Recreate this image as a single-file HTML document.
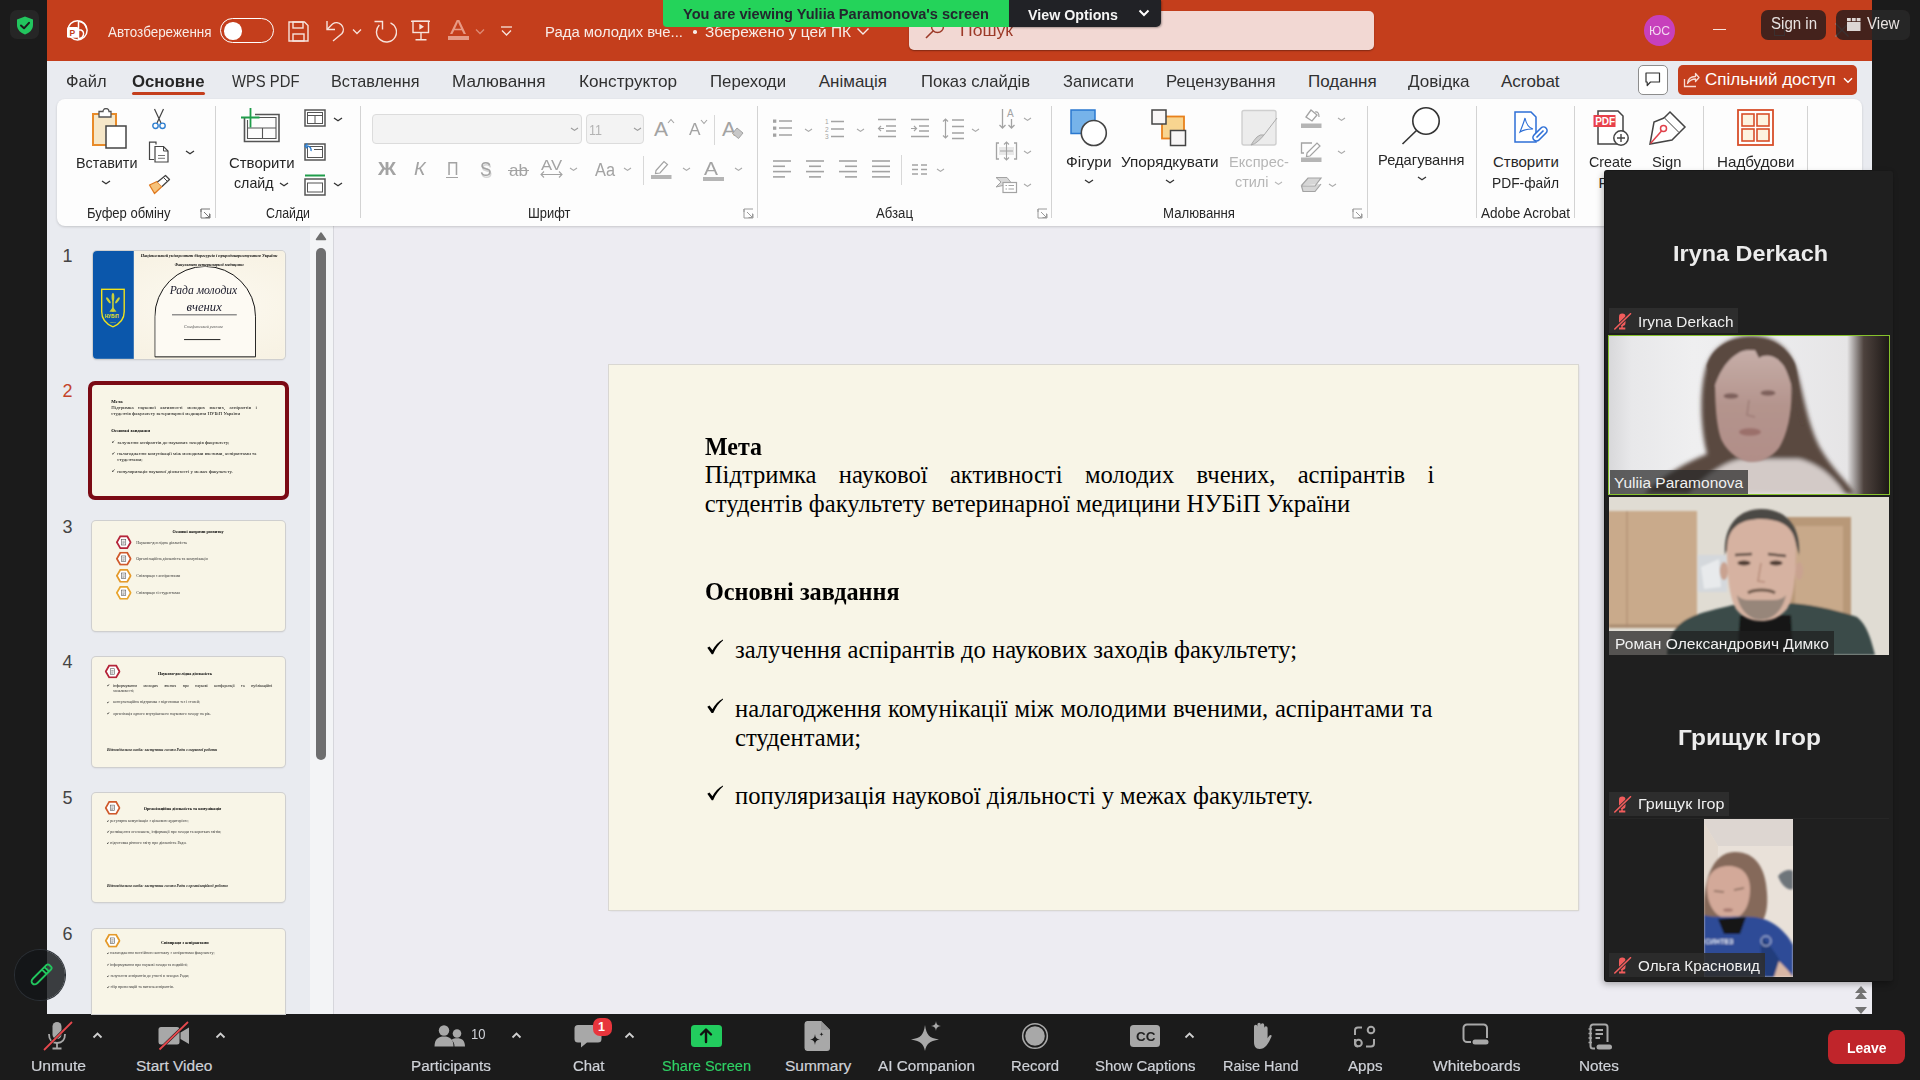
<!DOCTYPE html>
<html><head><meta charset="utf-8"><style>
html,body{margin:0;padding:0;width:1920px;height:1080px;overflow:hidden;background:#1b1b1b;}
body>div,body>svg{position:absolute;}
.t{transform-origin:0 50%;}
</style></head><body>
<div style="left:47px;top:0px;width:1825px;height:61px;background:#c43e1c;"></div>
<div style="left:47px;top:61px;width:1825px;height:953px;background:#e9ebf0;"></div>
<div style="left:334px;top:226px;width:1538px;height:788px;background:#edecf2;"></div>
<div style="left:310px;top:226px;width:23px;height:788px;background:#f3f4f6;"></div>
<div style="left:333px;top:226px;width:1px;height:788px;background:#d6d6dc;"></div>
<div style="left:57px;top:99px;width:1805px;height:127px;background:#fdfdfd;border-radius:8px;box-shadow:0 1px 2.5px rgba(0,0,0,0.16);"></div>
<div style="left:609px;top:365px;width:969px;height:545px;background:#f8f5e7;box-shadow:0 0 0 1px #d9d7d2, 1px 1px 2px rgba(0,0,0,0.10);"></div>
<div style="left:10px;top:10px;width:29px;height:29px;background:#262626;border-radius:7px;"></div>
<svg style="left:16px;top:16px;" width="18" height="19" viewBox="0 0 18 19"><path d="M9 0.5 L17 3.5 L17 9 C17 13.5 13.5 17 9 18.5 C4.5 17 1 13.5 1 9 L1 3.5 Z" fill="#22c55e"/><path d="M5 9.5 L8 12.3 L13 6.8" stroke="#1b1b1b" stroke-width="2" fill="none" stroke-linecap="round" stroke-linejoin="round"/></svg>
<svg style="left:64px;top:18px;" width="26" height="26" viewBox="0 0 26 26"><circle cx="13.5" cy="12.3" r="9.6" fill="none" stroke="#fff" stroke-width="1.5"/><path d="M14.5 3 V21.5" stroke="#fff" stroke-width="1.5"/><path d="M14.5 12 H17 A4.5 4.5 0 0 1 14.5 20.5" fill="none" stroke="#fff" stroke-width="1.4"/><path d="M14.5 3.2 A9.5 9.5 0 0 1 22.5 10.5" fill="none" stroke="#fff" stroke-width="1.4"/><rect x="3" y="9" width="11.5" height="10.8" rx="1.6" fill="#fff"/><text x="5.6" y="17.6" font-family="Liberation Sans" font-weight="bold" font-size="8.5" fill="#c43e1c">P</text></svg>
<div id="t0" class="t" style="transform:scaleX(0.8955);left:108px;top:23.95px;font-family:'Liberation Sans',sans-serif;font-size:15px;line-height:15px;color:#f8ece8;font-weight:400;white-space:pre;">Автозбереження</div>
<div style="left:219.5px;top:18px;width:54px;height:25px;background:transparent;border:1.5px solid #fff;border-radius:13px;box-sizing:border-box;"></div>
<div style="left:224px;top:22px;width:17.5px;height:17.5px;background:#fff;border-radius:50%;"></div>
<svg style="left:288px;top:21px;" width="21" height="21" viewBox="0 0 21 21"><path d="M1 1 H16.5 L20 4.5 V20 H1 Z" fill="none" stroke="#f7e3dc" stroke-width="1.4"/><rect x="5" y="1" width="10" height="6" fill="none" stroke="#f7e3dc" stroke-width="1.4"/><rect x="5" y="13" width="11" height="7" fill="none" stroke="#f7e3dc" stroke-width="1.4"/></svg>
<svg style="left:324px;top:19px;" width="22" height="24" viewBox="0 0 22 24"><path d="M3 2 V10.5 H11" fill="none" stroke="#f7e3dc" stroke-width="1.4"/><path d="M3.5 10 L8.5 5 A6.8 6.8 0 0 1 18 14.5 L9 22" fill="none" stroke="#f7e3dc" stroke-width="1.4"/></svg>
<svg style="left:352px;top:28px;" width="10" height="7" viewBox="0 0 10 7"><path d="M1 1.5 L5 5.5 L9 1.5" fill="none" stroke="#f7e3dc" stroke-width="1.3"/></svg>
<svg style="left:373px;top:19px;" width="24" height="24" viewBox="0 0 24 24"><path d="M6.3 6 A10 10 0 1 0 17.5 3.8" fill="none" stroke="#f7e3dc" stroke-width="1.4"/><path d="M1.5 2.5 H9.5 V10.5" fill="none" stroke="#f7e3dc" stroke-width="1.4"/></svg>
<svg style="left:410px;top:20px;" width="22" height="22" viewBox="0 0 22 22"><path d="M1 1.3 H20" stroke="#f7e3dc" stroke-width="1.4"/><rect x="3" y="1.3" width="15.5" height="11.2" fill="none" stroke="#f7e3dc" stroke-width="1.4"/><path d="M11 12.5 V19.7 M5.5 19.7 H16.5" stroke="#f7e3dc" stroke-width="1.4"/><path d="M9.3 3.8 L14 6.8 L9.3 9.8 Z" fill="#f7e3dc"/></svg>
<div id="t1" class="t" style="transform:scaleX(1.1991);left:450px;top:17.00px;font-family:'Liberation Sans',sans-serif;font-size:20px;line-height:20px;color:#e89a85;font-weight:400;white-space:pre;">A</div>
<div style="left:448px;top:36px;width:20.5px;height:4px;background:#e59a86;"></div>
<svg style="left:475px;top:28px;" width="10" height="7" viewBox="0 0 10 7"><path d="M1 1.5 L5 5.5 L9 1.5" fill="none" stroke="#dd8a74" stroke-width="1.3"/></svg>
<svg style="left:500px;top:26px;" width="13" height="10" viewBox="0 0 13 10"><path d="M1 1 H12" stroke="#f7e3dc" stroke-width="1.3"/><path d="M2 4.5 L6.5 9 L11 4.5" fill="none" stroke="#f7e3dc" stroke-width="1.3"/></svg>
<div id="t2" class="t" style="transform:scaleX(0.9599);left:545px;top:23.83px;font-family:'Liberation Sans',sans-serif;font-size:15.5px;line-height:15.5px;color:#f8ece8;font-weight:400;white-space:pre;">Рада молодих вче...</div>
<div style="left:693px;top:30px;width:3.5px;height:3.5px;background:#f8ece8;border-radius:50%;"></div>
<div id="t3" class="t" style="transform:scaleX(0.9949);left:704.5px;top:23.83px;font-family:'Liberation Sans',sans-serif;font-size:15.5px;line-height:15.5px;color:#f8ece8;font-weight:400;white-space:pre;">Збережено у цей ПК</div>
<svg style="left:856px;top:27px;" width="14" height="9" viewBox="0 0 14 9"><path d="M1.5 1.5 L7 7 L12.5 1.5" fill="none" stroke="#f8ece8" stroke-width="1.4"/></svg>
<div style="left:908.5px;top:10.5px;width:465.5px;height:39px;background:#f2d8d3;border-radius:5px;box-shadow:0 1px 1.5px rgba(0,0,0,0.35);"></div>
<svg style="left:924px;top:18px;" width="22" height="22" viewBox="0 0 22 22"><circle cx="13.5" cy="8.5" r="6" fill="none" stroke="#9c3a28" stroke-width="1.5"/><path d="M9.3 12.7 L2 20" stroke="#9c3a28" stroke-width="1.6"/></svg>
<div id="t4" class="t" style="transform:scaleX(1.0653);left:960px;top:22.48px;font-family:'Liberation Sans',sans-serif;font-size:16.5px;line-height:16.5px;color:#9c3a28;font-weight:400;white-space:pre;">Пошук</div>
<div style="left:1644px;top:15px;width:30.5px;height:30.5px;background:#c740bc;border-radius:50%;"></div>
<div id="t5" class="t" style="transform:scaleX(0.9379);left:1649px;top:24.45px;font-family:'Liberation Sans',sans-serif;font-size:13px;line-height:13px;color:#f3d8f0;font-weight:400;white-space:pre;">ЮС</div>
<div style="left:1713px;top:29px;width:13px;height:1.2px;background:#f7e3dc;"></div>
<div style="left:1774px;top:25px;width:10.5px;height:11px;background:transparent;border:1.3px solid #8a8a8a;box-sizing:border-box;"></div>
<div style="left:1761px;top:10px;width:65px;height:30px;background:rgba(40,28,28,0.82);border-radius:7px;"></div>
<div id="t6" class="t" style="transform:scaleX(0.9403);left:1771px;top:16.20px;font-family:'Liberation Sans',sans-serif;font-size:16px;line-height:16px;color:#e8e2e0;font-weight:400;white-space:pre;">Sign in</div>
<svg style="left:1834px;top:22px;" width="16" height="16" viewBox="0 0 16 16"><path d="M1.5 1.5 L14.5 14.5 M14.5 1.5 L1.5 14.5" stroke="#8a8a8a" stroke-width="1.3"/></svg>
<div style="left:1836px;top:10px;width:74px;height:30px;background:rgba(40,28,28,0.82);border-radius:7px;"></div>
<div style="left:1872px;top:10px;width:38px;height:30px;background:#262626;border-radius:0 7px 7px 0;"></div>
<svg style="left:1846.5px;top:18px;" width="14" height="13" viewBox="0 0 14 13"><rect x="0" y="4" width="13.5" height="9" fill="#dcd6d4"/><rect x="0" y="0" width="3.8" height="3.2" fill="#dcd6d4"/><rect x="4.9" y="0" width="3.8" height="3.2" fill="#dcd6d4"/><rect x="9.7" y="0" width="3.8" height="3.2" fill="#dcd6d4"/></svg>
<div id="t7" class="t" style="transform:scaleX(0.9450);left:1867px;top:16.20px;font-family:'Liberation Sans',sans-serif;font-size:16px;line-height:16px;color:#e8e2e0;font-weight:400;white-space:pre;">View</div>
<div style="left:663px;top:0px;width:346px;height:27px;background:#24d35a;border-radius:0 0 0 4px;"></div>
<div style="left:1008.5px;top:0px;width:152px;height:26.5px;background:#212226;border-radius:0 0 5px 0;box-shadow:1px 1px 2px rgba(0,0,0,0.3);"></div>
<div id="t8" class="t" style="transform:scaleX(0.9720);left:683px;top:6.25px;font-family:'Liberation Sans',sans-serif;font-size:15px;line-height:15px;color:#23272e;font-weight:700;white-space:pre;">You are viewing Yuliia Paramonova's screen</div>
<div id="t9" class="t" style="transform:scaleX(0.9499);left:1028px;top:6.75px;font-family:'Liberation Sans',sans-serif;font-size:15px;line-height:15px;color:#f5f5f5;font-weight:700;white-space:pre;">View Options</div>
<svg style="left:1138px;top:9px;" width="12" height="9" viewBox="0 0 12 9"><path d="M1.5 1.5 L6 6 L10.5 1.5" fill="none" stroke="#fff" stroke-width="2"/></svg>
<div id="t10" class="t" style="transform:scaleX(0.9690);left:66px;top:72.85px;font-family:'Liberation Sans',sans-serif;font-size:17px;line-height:17px;color:#303030;font-weight:400;white-space:pre;">Файл</div>
<div id="t11" class="t" style="transform:scaleX(0.8715);left:232px;top:72.85px;font-family:'Liberation Sans',sans-serif;font-size:17px;line-height:17px;color:#303030;font-weight:400;white-space:pre;">WPS PDF</div>
<div id="t12" class="t" style="transform:scaleX(0.9527);left:331px;top:72.85px;font-family:'Liberation Sans',sans-serif;font-size:17px;line-height:17px;color:#303030;font-weight:400;white-space:pre;">Вставлення</div>
<div id="t13" class="t" style="transform:scaleX(1.0079);left:452px;top:72.85px;font-family:'Liberation Sans',sans-serif;font-size:17px;line-height:17px;color:#303030;font-weight:400;white-space:pre;">Малювання</div>
<div id="t14" class="t" style="transform:scaleX(1.0110);left:579px;top:72.85px;font-family:'Liberation Sans',sans-serif;font-size:17px;line-height:17px;color:#303030;font-weight:400;white-space:pre;">Конструктор</div>
<div id="t15" class="t" style="transform:scaleX(0.9868);left:710.4px;top:72.85px;font-family:'Liberation Sans',sans-serif;font-size:17px;line-height:17px;color:#303030;font-weight:400;white-space:pre;">Переходи</div>
<div id="t16" class="t" style="left:818.7px;top:72.85px;font-family:'Liberation Sans',sans-serif;font-size:17px;line-height:17px;color:#303030;font-weight:400;white-space:pre;">Анімація</div>
<div id="t17" class="t" style="transform:scaleX(0.9787);left:921.4px;top:72.85px;font-family:'Liberation Sans',sans-serif;font-size:17px;line-height:17px;color:#303030;font-weight:400;white-space:pre;">Показ слайдів</div>
<div id="t18" class="t" style="transform:scaleX(0.9687);left:1062.5px;top:72.85px;font-family:'Liberation Sans',sans-serif;font-size:17px;line-height:17px;color:#303030;font-weight:400;white-space:pre;">Записати</div>
<div id="t19" class="t" style="transform:scaleX(0.9880);left:1166px;top:72.85px;font-family:'Liberation Sans',sans-serif;font-size:17px;line-height:17px;color:#303030;font-weight:400;white-space:pre;">Рецензування</div>
<div id="t20" class="t" style="left:1308px;top:72.85px;font-family:'Liberation Sans',sans-serif;font-size:17px;line-height:17px;color:#303030;font-weight:400;white-space:pre;">Подання</div>
<div id="t21" class="t" style="transform:scaleX(1.0056);left:1408px;top:72.85px;font-family:'Liberation Sans',sans-serif;font-size:17px;line-height:17px;color:#303030;font-weight:400;white-space:pre;">Довідка</div>
<div id="t22" class="t" style="left:1501px;top:72.85px;font-family:'Liberation Sans',sans-serif;font-size:17px;line-height:17px;color:#303030;font-weight:400;white-space:pre;">Acrobat</div>
<div id="t23" class="t" style="transform:scaleX(0.9862);left:132px;top:72.85px;font-family:'Liberation Sans',sans-serif;font-size:17px;line-height:17px;color:#262626;font-weight:700;white-space:pre;">Основне</div>
<div style="left:132px;top:91.5px;width:73px;height:3px;background:#c43e1c;border-radius:1.5px;"></div>
<div style="left:1638px;top:65px;width:30px;height:30px;background:#ffffff;border:1px solid #8d8d8d;border-radius:5px;box-sizing:border-box;"></div>
<svg style="left:1645px;top:72px;" width="16" height="15" viewBox="0 0 16 15"><path d="M1 1 H14.5 V10 H5.5 L2.2 13.5 V10 H1 Z" fill="none" stroke="#333" stroke-width="1.2" stroke-linejoin="round"/></svg>
<div style="left:1678px;top:64.7px;width:179px;height:30.3px;background:#c43e1c;border-radius:5px;"></div>
<svg style="left:1683px;top:72px;" width="17" height="16" viewBox="0 0 17 16"><path d="M1.5 7 V14.5 H13" fill="none" stroke="#f7dcd4" stroke-width="1.3"/><path d="M4.5 11.5 C5 6.5 8.5 4.5 12.5 4.5 V1.5 L16 5.5 L12.5 9.5 V7 C9 7 6.5 8.5 4.5 11.5 Z" fill="none" stroke="#f7dcd4" stroke-width="1.3" stroke-linejoin="round"/></svg>
<div id="t24" class="t" style="left:1705px;top:71.25px;font-family:'Liberation Sans',sans-serif;font-size:17px;line-height:17px;color:#ffffff;font-weight:400;white-space:pre;">Спільний доступ</div>
<svg style="left:1842.5px;top:77px;" width="10" height="7" viewBox="0 0 10 7"><path d="M1 1.3 L5 5.3 L9 1.3" fill="none" stroke="#fff" stroke-width="1.4"/></svg>
<div style="left:214.5px;top:106px;width:1px;height:112px;background:#d3d3d3;"></div>
<div style="left:360px;top:106px;width:1px;height:112px;background:#d3d3d3;"></div>
<div style="left:757px;top:106px;width:1px;height:112px;background:#d3d3d3;"></div>
<div style="left:1051px;top:106px;width:1px;height:112px;background:#d3d3d3;"></div>
<div style="left:1366.5px;top:106px;width:1px;height:112px;background:#d3d3d3;"></div>
<div style="left:1476px;top:106px;width:1px;height:112px;background:#d3d3d3;"></div>
<div style="left:1573.5px;top:106px;width:1px;height:112px;background:#d3d3d3;"></div>
<div style="left:1703px;top:106px;width:1px;height:112px;background:#d3d3d3;"></div>
<div style="left:1807px;top:106px;width:1px;height:112px;background:#d3d3d3;"></div>
<svg style="left:90px;top:108px;" width="40" height="42" viewBox="0 0 40 42"><rect x="3" y="6" width="23" height="31" fill="#f6e7c8" stroke="#e88b2a" stroke-width="2"/><path d="M9 3.5 H13 A3 3 0 0 1 19 3.5 H21 V9 H9 Z" fill="#fff" stroke="#555" stroke-width="1.3"/><rect x="16" y="18" width="20" height="22" fill="#fff" stroke="#444" stroke-width="1.5"/></svg>
<div id="t25" class="t" style="transform:scaleX(0.9586);left:76px;top:155.25px;font-family:'Liberation Sans',sans-serif;font-size:15px;line-height:15px;color:#262626;font-weight:400;white-space:pre;">Вставити</div>
<svg style="left:101px;top:180px;" width="10" height="6" viewBox="0 0 10 6"><path d="M1 1 L5.0 3.80 L9 1" fill="none" stroke="#333" stroke-width="1.3"/></svg>
<svg style="left:151px;top:108px;" width="16" height="22" viewBox="0 0 16 22"><path d="M3.5 1 L10 15 M12.5 1 L6 15" stroke="#444" stroke-width="1.2"/><circle cx="4.5" cy="17.8" r="2.7" fill="none" stroke="#2f7fd0" stroke-width="1.4"/><circle cx="11.5" cy="17.8" r="2.7" fill="none" stroke="#2f7fd0" stroke-width="1.4"/></svg>
<svg style="left:148px;top:141px;" width="22" height="22" viewBox="0 0 22 22"><path d="M8 3.5 V1.2 H1.5 V18.5 H6" fill="none" stroke="#444" stroke-width="1.2"/><path d="M7 5.5 H15.5 L20 10 V21 H7 Z" fill="#fff" stroke="#444" stroke-width="1.2"/><path d="M15.5 5.5 V10 H20" fill="none" stroke="#444" stroke-width="1"/><path d="M10 14.5 H17 M10 17.3 H17" stroke="#666" stroke-width="0.9"/></svg>
<svg style="left:184.5px;top:150px;" width="10" height="6" viewBox="0 0 10 6"><path d="M1 1 L5.0 3.80 L9 1" fill="none" stroke="#333" stroke-width="1.3"/></svg>
<svg style="left:148px;top:174px;" width="23" height="21" viewBox="0 0 23 21"><path d="M1.5 11 L9 7.5 L14 12.5 L6.5 19.5 Z" fill="#f6c27a" stroke="#e07a20" stroke-width="1.3" stroke-linejoin="round"/><path d="M9.5 8 L17.5 1.5 L21.5 5.5 L14 12.5" fill="#fff" stroke="#444" stroke-width="1.3" stroke-linejoin="round"/><path d="M15.5 3.5 L19.5 7.5" stroke="#444" stroke-width="1"/></svg>
<div id="t26" class="t" style="transform:scaleX(0.9312);left:86.5px;top:205.60px;font-family:'Liberation Sans',sans-serif;font-size:14px;line-height:14px;color:#262626;font-weight:400;white-space:pre;">Буфер обміну</div>
<svg style="left:199.5px;top:207.5px;" width="11" height="11" viewBox="0 0 11 11"><path d="M1 4 V1 H10 M1 1 V10 H10 V6" fill="none" stroke="#777" stroke-width="1"/><path d="M4 4 L9.5 9.5 M9.5 5.5 V9.5 H5.5" fill="none" stroke="#777" stroke-width="1"/></svg>
<svg style="left:238px;top:106px;" width="44" height="38" viewBox="0 0 44 38"><path d="M6.5 12 V35.5 H41 V8.5 H17" fill="none" stroke="#555" stroke-width="1.6"/><path d="M9.5 14 V32.5 H38 V11.5 H17 M9.5 22 H38 M24.5 22 V32.5" fill="none" stroke="#555" stroke-width="1.1"/><path d="M3 11.5 H21.5 M12.5 2 V21.5" stroke="#1f9d4a" stroke-width="1.8"/></svg>
<div id="t27" class="t" style="transform:scaleX(0.9950);left:228.5px;top:154.75px;font-family:'Liberation Sans',sans-serif;font-size:15px;line-height:15px;color:#262626;font-weight:400;white-space:pre;">Створити</div>
<div id="t28" class="t" style="transform:scaleX(0.9465);left:234px;top:174.75px;font-family:'Liberation Sans',sans-serif;font-size:15px;line-height:15px;color:#262626;font-weight:400;white-space:pre;">слайд</div>
<svg style="left:279px;top:182px;" width="10" height="6" viewBox="0 0 10 6"><path d="M1 1 L5.0 3.80 L9 1" fill="none" stroke="#333" stroke-width="1.3"/></svg>
<svg style="left:304px;top:109px;" width="23" height="19" viewBox="0 0 23 19"><rect x="1" y="1" width="20" height="16" fill="#fff" stroke="#555" stroke-width="1.5"/><rect x="3.5" y="3.5" width="15" height="11" fill="none" stroke="#555" stroke-width="1"/><path d="M3.5 6.5 H18.5 M11 6.5 V14.5" stroke="#555" stroke-width="1"/></svg>
<svg style="left:333px;top:117px;" width="10" height="6" viewBox="0 0 10 6"><path d="M1 1 L5.0 3.80 L9 1" fill="none" stroke="#333" stroke-width="1.3"/></svg>
<svg style="left:304px;top:141px;" width="23" height="20" viewBox="0 0 23 20"><rect x="1" y="3" width="20" height="16" fill="#fff" stroke="#555" stroke-width="1.5"/><rect x="3.5" y="5.5" width="15" height="11" fill="none" stroke="#555" stroke-width="1"/><path d="M7 10 A4 4 0 0 0 3 5 L1 5" fill="none" stroke="#2f7fd0" stroke-width="1.4"/><path d="M3.5 2.5 L1 5 L3.5 7.5" fill="none" stroke="#2f7fd0" stroke-width="1.3"/><path d="M10 8.5 H18" stroke="#555" stroke-width="1"/></svg>
<svg style="left:304px;top:174px;" width="23" height="22" viewBox="0 0 23 22"><path d="M1 1.5 H21" stroke="#1f9d4a" stroke-width="2"/><rect x="1" y="5" width="20" height="16" fill="#fff" stroke="#555" stroke-width="1.5"/><rect x="3.5" y="9" width="15" height="9" fill="none" stroke="#555" stroke-width="1"/></svg>
<svg style="left:333px;top:182px;" width="10" height="6" viewBox="0 0 10 6"><path d="M1 1 L5.0 3.80 L9 1" fill="none" stroke="#333" stroke-width="1.3"/></svg>
<div id="t29" class="t" style="transform:scaleX(0.8822);left:265.5px;top:205.60px;font-family:'Liberation Sans',sans-serif;font-size:14px;line-height:14px;color:#262626;font-weight:400;white-space:pre;">Слайди</div>
<div style="left:372px;top:114px;width:210px;height:30px;background:#f3f3f3;border:1px solid #dcdcdc;border-radius:4px;box-sizing:border-box;"></div>
<svg style="left:569.5px;top:127px;" width="9" height="6" viewBox="0 0 9 6"><path d="M1 1 L4.5 3.45 L8 1" fill="none" stroke="#9a9a9a" stroke-width="1.1"/></svg>
<div style="left:585.5px;top:114px;width:58.5px;height:30px;background:#f3f3f3;border:1px solid #dcdcdc;border-radius:4px;box-sizing:border-box;"></div>
<div id="t30" class="t" style="transform:scaleX(0.8345);left:589px;top:121.75px;font-family:'Liberation Sans',sans-serif;font-size:15px;line-height:15px;color:#b3b3b3;font-weight:400;white-space:pre;">11</div>
<svg style="left:632.5px;top:127px;" width="9" height="6" viewBox="0 0 9 6"><path d="M1 1 L4.5 3.45 L8 1" fill="none" stroke="#9a9a9a" stroke-width="1.1"/></svg>
<div id="t31" class="t" style="left:654px;top:117.65px;font-family:'Liberation Sans',sans-serif;font-size:21px;line-height:21px;color:#a3a3a3;font-weight:400;white-space:pre;">A</div>
<svg style="left:667px;top:118px;" width="8" height="6" viewBox="0 0 8 6"><path d="M1 5 L4 1.5 L7 5" fill="none" stroke="#a3a3a3" stroke-width="1.1"/></svg>
<div id="t32" class="t" style="transform:scaleX(1.0138);left:689px;top:121.05px;font-family:'Liberation Sans',sans-serif;font-size:17px;line-height:17px;color:#a3a3a3;font-weight:400;white-space:pre;">A</div>
<svg style="left:699.5px;top:119px;" width="8" height="6" viewBox="0 0 8 6"><path d="M1 1 L4 4.5 L7 1" fill="none" stroke="#a3a3a3" stroke-width="1.1"/></svg>
<div style="left:714px;top:114.5px;width:1px;height:30px;background:#d8d8d8;"></div>
<div id="t33" class="t" style="left:722px;top:117.65px;font-family:'Liberation Sans',sans-serif;font-size:21px;line-height:21px;color:#a3a3a3;font-weight:400;white-space:pre;">A</div>
<svg style="left:731px;top:127px;" width="13" height="13" viewBox="0 0 13 13"><path d="M6 1 L12 6 L7.5 11.5 L1.5 6.5 Z" fill="#c8c8c8" stroke="#a3a3a3" stroke-width="1"/></svg>
<div id="t34" class="t" style="transform:scaleX(1.0473);left:377.5px;top:159.15px;font-family:'Liberation Sans',sans-serif;font-size:19px;line-height:19px;color:#a3a3a3;font-weight:700;white-space:pre;">Ж</div>
<div id="t35" class="t" style="transform:scaleX(1.0265);left:414px;top:159.15px;font-family:'Liberation Sans',sans-serif;font-size:19px;line-height:19px;color:#a3a3a3;font-weight:400;white-space:pre;font-style:italic;">К</div>
<div id="t36" class="t" style="transform:scaleX(0.8889);left:446.5px;top:160.00px;font-family:'Liberation Sans',sans-serif;font-size:18px;line-height:18px;color:#a3a3a3;font-weight:400;white-space:pre;">П</div>
<div style="left:446px;top:176.5px;width:12px;height:1.5px;background:#a3a3a3;"></div>
<div id="t37" class="t" style="transform:scaleX(0.8618);left:480px;top:158.50px;font-family:'Liberation Sans',sans-serif;font-size:20px;line-height:20px;color:#a3a3a3;font-weight:400;white-space:pre;text-shadow:1px 1.5px 0 #d5d5d5;">S</div>
<div id="t38" class="t" style="transform:scaleX(1.0041);left:508.5px;top:161.55px;font-family:'Liberation Sans',sans-serif;font-size:17px;line-height:17px;color:#a3a3a3;font-weight:400;white-space:pre;">ab</div>
<div style="left:507.5px;top:169.5px;width:21.5px;height:1.3px;background:#a3a3a3;"></div>
<div id="t39" class="t" style="transform:scaleX(1.1107);left:541px;top:157.25px;font-family:'Liberation Sans',sans-serif;font-size:15px;line-height:15px;color:#a3a3a3;font-weight:400;white-space:pre;">AV</div>
<svg style="left:540px;top:170px;" width="24" height="9" viewBox="0 0 24 9"><path d="M1 4.5 H22 M4 1.5 L1 4.5 L4 7.5 M19 1.5 L22 4.5 L19 7.5" fill="none" stroke="#a3a3a3" stroke-width="1.1"/></svg>
<svg style="left:568.5px;top:167px;" width="9" height="6" viewBox="0 0 9 6"><path d="M1 1 L4.5 3.45 L8 1" fill="none" stroke="#a8a8a8" stroke-width="1.1"/></svg>
<div id="t40" class="t" style="transform:scaleX(0.9078);left:595px;top:160.70px;font-family:'Liberation Sans',sans-serif;font-size:18px;line-height:18px;color:#a3a3a3;font-weight:400;white-space:pre;">Aa</div>
<svg style="left:622.5px;top:167px;" width="9" height="6" viewBox="0 0 9 6"><path d="M1 1 L4.5 3.45 L8 1" fill="none" stroke="#a8a8a8" stroke-width="1.1"/></svg>
<div style="left:643px;top:155.5px;width:1px;height:29px;background:#d8d8d8;"></div>
<svg style="left:650px;top:159px;" width="23" height="21" viewBox="0 0 23 21"><path d="M6 11.5 L14 2.5 L17.5 5.5 L10 14 L5.5 14.5 Z" fill="#fff" stroke="#a3a3a3" stroke-width="1.2"/><rect x="1" y="16" width="20.5" height="4" fill="#b5b5b5"/></svg>
<svg style="left:681.5px;top:167px;" width="9" height="6" viewBox="0 0 9 6"><path d="M1 1 L4.5 3.45 L8 1" fill="none" stroke="#a8a8a8" stroke-width="1.1"/></svg>
<div id="t41" class="t" style="transform:scaleX(1.1034);left:704px;top:159.35px;font-family:'Liberation Sans',sans-serif;font-size:19px;line-height:19px;color:#a3a3a3;font-weight:400;white-space:pre;">A</div>
<div style="left:703px;top:176.5px;width:20.5px;height:4px;background:#b5b5b5;"></div>
<svg style="left:733.5px;top:167px;" width="9" height="6" viewBox="0 0 9 6"><path d="M1 1 L4.5 3.45 L8 1" fill="none" stroke="#a8a8a8" stroke-width="1.1"/></svg>
<div id="t42" class="t" style="transform:scaleX(0.9227);left:528px;top:205.60px;font-family:'Liberation Sans',sans-serif;font-size:14px;line-height:14px;color:#262626;font-weight:400;white-space:pre;">Шрифт</div>
<svg style="left:743px;top:207.5px;" width="11" height="11" viewBox="0 0 11 11"><path d="M1 4 V1 H10 M1 1 V10 H10 V6" fill="none" stroke="#9a9a9a" stroke-width="1"/><path d="M4 4 L9.5 9.5 M9.5 5.5 V9.5 H5.5" fill="none" stroke="#9a9a9a" stroke-width="1"/></svg>
<svg style="left:772px;top:118px;" width="22" height="21" viewBox="0 0 22 21"><rect x="1" y="1.5" width="3.3" height="3.3" fill="#a3a3a3"/><rect x="1" y="8.5" width="3.3" height="3.3" fill="#a3a3a3"/><rect x="1" y="15.5" width="3.3" height="3.3" fill="#a3a3a3"/><path d="M7 3 H20 M7 10 H20 M7 17 H20" stroke="#a3a3a3" stroke-width="1.6"/></svg>
<svg style="left:803.5px;top:128px;" width="9" height="6" viewBox="0 0 9 6"><path d="M1 1 L4.5 3.45 L8 1" fill="none" stroke="#a8a8a8" stroke-width="1.1"/></svg>
<svg style="left:824px;top:117px;" width="22" height="23" viewBox="0 0 22 23"><text x="1" y="7" font-family="Liberation Sans" font-size="6.5" fill="#a3a3a3">1</text><text x="1" y="14.5" font-family="Liberation Sans" font-size="6.5" fill="#a3a3a3">2</text><text x="1" y="22" font-family="Liberation Sans" font-size="6.5" fill="#a3a3a3">3</text><path d="M7 4.5 H20 M7 12 H20 M7 19.5 H20" stroke="#a3a3a3" stroke-width="1.6"/></svg>
<svg style="left:855.5px;top:128px;" width="9" height="6" viewBox="0 0 9 6"><path d="M1 1 L4.5 3.45 L8 1" fill="none" stroke="#a8a8a8" stroke-width="1.1"/></svg>
<svg style="left:877px;top:118px;" width="21" height="20" viewBox="0 0 21 20"><path d="M1 1.5 H19 M9 8 H19 M9 13 H19 M1 18.5 H19" stroke="#a3a3a3" stroke-width="1.6"/><path d="M7 10.5 H1.5 M4 8 L1.5 10.5 L4 13" fill="none" stroke="#a3a3a3" stroke-width="1.2"/></svg>
<svg style="left:910px;top:118px;" width="21" height="20" viewBox="0 0 21 20"><path d="M1 1.5 H19 M9 8 H19 M9 13 H19 M1 18.5 H19" stroke="#a3a3a3" stroke-width="1.6"/><path d="M1 10.5 H6.5 M4 8 L6.5 10.5 L4 13" fill="none" stroke="#a3a3a3" stroke-width="1.2"/></svg>
<svg style="left:942px;top:117px;" width="24" height="23" viewBox="0 0 24 23"><path d="M3.5 2 V21 M1 4.5 L3.5 2 L6 4.5 M1 18.5 L3.5 21 L6 18.5" fill="none" stroke="#a3a3a3" stroke-width="1.2"/><path d="M10 3 H22 M10 9.5 H22 M10 16 H22 M10 21.5 H22" stroke="#a3a3a3" stroke-width="1.6"/></svg>
<svg style="left:970.5px;top:128px;" width="9" height="6" viewBox="0 0 9 6"><path d="M1 1 L4.5 3.45 L8 1" fill="none" stroke="#a8a8a8" stroke-width="1.1"/></svg>
<svg style="left:773px;top:160px;" width="20" height="19" viewBox="0 0 20 19"><path d="M0 1.0 H18" stroke="#a3a3a3" stroke-width="1.6"/><path d="M0 6.3 H12" stroke="#a3a3a3" stroke-width="1.6"/><path d="M0 11.6 H18" stroke="#a3a3a3" stroke-width="1.6"/><path d="M0 16.9 H12" stroke="#a3a3a3" stroke-width="1.6"/></svg>
<svg style="left:806px;top:160px;" width="20" height="19" viewBox="0 0 20 19"><path d="M0 1.0 H18" stroke="#a3a3a3" stroke-width="1.6"/><path d="M3 6.3 H15" stroke="#a3a3a3" stroke-width="1.6"/><path d="M0 11.6 H18" stroke="#a3a3a3" stroke-width="1.6"/><path d="M3 16.9 H15" stroke="#a3a3a3" stroke-width="1.6"/></svg>
<svg style="left:839px;top:160px;" width="20" height="19" viewBox="0 0 20 19"><path d="M0 1.0 H18" stroke="#a3a3a3" stroke-width="1.6"/><path d="M6 6.3 H18" stroke="#a3a3a3" stroke-width="1.6"/><path d="M0 11.6 H18" stroke="#a3a3a3" stroke-width="1.6"/><path d="M6 16.9 H18" stroke="#a3a3a3" stroke-width="1.6"/></svg>
<svg style="left:872px;top:160px;" width="20" height="19" viewBox="0 0 20 19"><path d="M0 1.0 H18" stroke="#a3a3a3" stroke-width="1.6"/><path d="M0 6.3 H18" stroke="#a3a3a3" stroke-width="1.6"/><path d="M0 11.6 H18" stroke="#a3a3a3" stroke-width="1.6"/><path d="M0 16.9 H18" stroke="#a3a3a3" stroke-width="1.6"/></svg>
<div style="left:900.5px;top:154.5px;width:1px;height:30px;background:#d8d8d8;"></div>
<svg style="left:910.5px;top:164px;" width="17" height="11" viewBox="0 0 17 11"><path d="M1 1 H7 M10 1 H16 M1 5.5 H7 M10 5.5 H16 M1 10 H7 M10 10 H16" stroke="#a3a3a3" stroke-width="1.4"/></svg>
<svg style="left:936px;top:168px;" width="9" height="6" viewBox="0 0 9 6"><path d="M1 1 L4.5 3.45 L8 1" fill="none" stroke="#a8a8a8" stroke-width="1.1"/></svg>
<svg style="left:998px;top:108px;" width="19" height="22" viewBox="0 0 19 22"><path d="M4.5 1 V20 M1.5 17 L4.5 20 L7.5 17 M13.5 11 V20 M10.5 17 L13.5 20 L16.5 17" fill="none" stroke="#a3a3a3" stroke-width="1.3"/><text x="9" y="9" font-family="Liberation Sans" font-size="10" fill="#a3a3a3">A</text></svg>
<svg style="left:1023px;top:117px;" width="9" height="6" viewBox="0 0 9 6"><path d="M1 1 L4.5 3.45 L8 1" fill="none" stroke="#a8a8a8" stroke-width="1.1"/></svg>
<svg style="left:995px;top:141px;" width="23" height="21" viewBox="0 0 23 21"><path d="M4 2 H1.5 V18 H4 M19 2 H21.5 V18 H19" fill="none" stroke="#a3a3a3" stroke-width="1.3"/><rect x="4" y="6" width="15" height="8" fill="#e8e8e8"/><path d="M11.5 1 V19 M9 3.5 L11.5 1 L14 3.5 M9 16.5 L11.5 19 L14 16.5 M5 10 H18" fill="none" stroke="#a3a3a3" stroke-width="1.1"/></svg>
<svg style="left:1023px;top:150px;" width="9" height="6" viewBox="0 0 9 6"><path d="M1 1 L4.5 3.45 L8 1" fill="none" stroke="#a8a8a8" stroke-width="1.1"/></svg>
<svg style="left:995px;top:176px;" width="23" height="18" viewBox="0 0 23 18"><path d="M1 1.5 H12 L16 6.5 L10 9 L1 11 L6 6 Z" fill="#d8d8d8" stroke="#a3a3a3" stroke-width="1"/><rect x="8" y="6.5" width="13.5" height="10" fill="#fff" stroke="#a3a3a3" stroke-width="1.2"/><path d="M10.5 9.5 H12 M13.5 9.5 H19 M10.5 13 H12 M13.5 13 H19" stroke="#a3a3a3" stroke-width="1"/></svg>
<svg style="left:1023px;top:183px;" width="9" height="6" viewBox="0 0 9 6"><path d="M1 1 L4.5 3.45 L8 1" fill="none" stroke="#a8a8a8" stroke-width="1.1"/></svg>
<div id="t43" class="t" style="transform:scaleX(0.9419);left:876px;top:205.60px;font-family:'Liberation Sans',sans-serif;font-size:14px;line-height:14px;color:#262626;font-weight:400;white-space:pre;">Абзац</div>
<svg style="left:1037px;top:207.5px;" width="11" height="11" viewBox="0 0 11 11"><path d="M1 4 V1 H10 M1 1 V10 H10 V6" fill="none" stroke="#9a9a9a" stroke-width="1"/><path d="M4 4 L9.5 9.5 M9.5 5.5 V9.5 H5.5" fill="none" stroke="#9a9a9a" stroke-width="1"/></svg>
<svg style="left:1069px;top:108px;" width="40" height="40" viewBox="0 0 40 40"><rect x="2" y="2" width="24" height="23.5" fill="#76b3ea" stroke="#2a78cf" stroke-width="1.5"/><circle cx="24.8" cy="25" r="12.5" fill="#fff" stroke="#444" stroke-width="1.6"/></svg>
<div id="t44" class="t" style="transform:scaleX(1.0279);left:1066px;top:154.25px;font-family:'Liberation Sans',sans-serif;font-size:15px;line-height:15px;color:#262626;font-weight:400;white-space:pre;">Фігури</div>
<svg style="left:1083.5px;top:178.5px;" width="10" height="6" viewBox="0 0 10 6"><path d="M1 1 L5.0 3.80 L9 1" fill="none" stroke="#333" stroke-width="1.3"/></svg>
<svg style="left:1150px;top:108px;" width="40" height="40" viewBox="0 0 40 40"><rect x="12" y="8.5" width="22" height="22" fill="#f8d590" stroke="#e8811c" stroke-width="1.8"/><rect x="2" y="2" width="14" height="14" fill="#f8f6f6" stroke="#444" stroke-width="1.5"/><rect x="20.5" y="22.5" width="15" height="15" fill="#f8f6f6" stroke="#444" stroke-width="1.5"/></svg>
<div id="t45" class="t" style="transform:scaleX(1.0191);left:1121px;top:154.25px;font-family:'Liberation Sans',sans-serif;font-size:15px;line-height:15px;color:#262626;font-weight:400;white-space:pre;">Упорядкувати</div>
<svg style="left:1165px;top:178.5px;" width="10" height="6" viewBox="0 0 10 6"><path d="M1 1 L5.0 3.80 L9 1" fill="none" stroke="#333" stroke-width="1.3"/></svg>
<svg style="left:1240px;top:108px;" width="40" height="40" viewBox="0 0 40 40"><rect x="2" y="2.5" width="34" height="34.5" rx="2" fill="#ececec" stroke="#cfcfcf" stroke-width="1.4"/><path d="M37 10 L24 27 Q21 31 17 34 Q15 36 11 37 Q14 32 17 29 Q20 26 24 27" fill="#cfcfcf" stroke="#aaa" stroke-width="1"/></svg>
<div id="t46" class="t" style="transform:scaleX(0.9749);left:1229px;top:154.25px;font-family:'Liberation Sans',sans-serif;font-size:15px;line-height:15px;color:#b6b6b6;font-weight:400;white-space:pre;">Експрес-</div>
<div id="t47" class="t" style="transform:scaleX(0.9614);left:1234.5px;top:174.25px;font-family:'Liberation Sans',sans-serif;font-size:15px;line-height:15px;color:#b6b6b6;font-weight:400;white-space:pre;">стилі</div>
<svg style="left:1273.5px;top:181px;" width="9" height="6" viewBox="0 0 9 6"><path d="M1 1 L4.5 3.45 L8 1" fill="none" stroke="#b6b6b6" stroke-width="1.1"/></svg>
<svg style="left:1300px;top:108px;" width="23" height="22" viewBox="0 0 23 22"><path d="M6 9 L11 2 L17 7 L12 13 Z" fill="#fff" stroke="#a3a3a3" stroke-width="1.3"/><path d="M15 4 Q19 3 19 9" fill="none" stroke="#a3a3a3" stroke-width="1.2"/><rect x="1" y="15.5" width="20.5" height="4.5" fill="#b5b5b5"/></svg>
<svg style="left:1337px;top:117px;" width="9" height="6" viewBox="0 0 9 6"><path d="M1 1 L4.5 3.45 L8 1" fill="none" stroke="#a8a8a8" stroke-width="1.1"/></svg>
<svg style="left:1300px;top:141px;" width="23" height="22" viewBox="0 0 23 22"><path d="M12 2 H1.5 V12 H4" fill="none" stroke="#a3a3a3" stroke-width="1.3"/><path d="M7 12 L17 2 L20 5 L10 15 L6.5 15.5 Z" fill="#fff" stroke="#a3a3a3" stroke-width="1.2"/><rect x="1" y="16.5" width="20.5" height="4.5" fill="#b5b5b5"/></svg>
<svg style="left:1337px;top:150px;" width="9" height="6" viewBox="0 0 9 6"><path d="M1 1 L4.5 3.45 L8 1" fill="none" stroke="#a8a8a8" stroke-width="1.1"/></svg>
<svg style="left:1300px;top:176px;" width="23" height="18" viewBox="0 0 23 18"><path d="M1.5 9.5 L8 2 H21 L15 10 H1.5 L3 15.5 H15 L21 8" fill="#d6d6d6" stroke="#a3a3a3" stroke-width="1.2"/></svg>
<svg style="left:1328px;top:183px;" width="9" height="6" viewBox="0 0 9 6"><path d="M1 1 L4.5 3.45 L8 1" fill="none" stroke="#a8a8a8" stroke-width="1.1"/></svg>
<div id="t48" class="t" style="transform:scaleX(0.9425);left:1162.5px;top:205.60px;font-family:'Liberation Sans',sans-serif;font-size:14px;line-height:14px;color:#262626;font-weight:400;white-space:pre;">Малювання</div>
<svg style="left:1351.5px;top:207.5px;" width="11" height="11" viewBox="0 0 11 11"><path d="M1 4 V1 H10 M1 1 V10 H10 V6" fill="none" stroke="#9a9a9a" stroke-width="1"/><path d="M4 4 L9.5 9.5 M9.5 5.5 V9.5 H5.5" fill="none" stroke="#9a9a9a" stroke-width="1"/></svg>
<svg style="left:1400px;top:106px;" width="42" height="40" viewBox="0 0 42 40"><circle cx="26" cy="15" r="13.2" fill="#fff" stroke="#333" stroke-width="1.6"/><path d="M16.5 24.5 L2.5 38" stroke="#333" stroke-width="1.6"/></svg>
<div id="t49" class="t" style="transform:scaleX(0.9800);left:1378px;top:151.75px;font-family:'Liberation Sans',sans-serif;font-size:15px;line-height:15px;color:#262626;font-weight:400;white-space:pre;">Редагування</div>
<svg style="left:1416.5px;top:176px;" width="10" height="6" viewBox="0 0 10 6"><path d="M1 1 L5.0 3.80 L9 1" fill="none" stroke="#333" stroke-width="1.3"/></svg>
<svg style="left:1512px;top:110px;" width="36" height="40" viewBox="0 0 36 40"><path d="M3 2 H19 L24 7 V32 H3 Z" fill="#fff" stroke="#2e6fd6" stroke-width="1.5"/><path d="M8 22 C10 17 12 12 13 8 C14 13 17 18 21 19 C17 19 11 20 8 22 Z" fill="none" stroke="#2e6fd6" stroke-width="1.1"/><path d="M22 25 L29 18 A3.5 3.5 0 0 1 34 23 L27 30 A3.5 3.5 0 0 1 22 25 Z M24.5 27.5 L31.5 20.5" fill="#fff" stroke="#2e6fd6" stroke-width="1.6"/></svg>
<div id="t50" class="t" style="left:1493px;top:154.25px;font-family:'Liberation Sans',sans-serif;font-size:15px;line-height:15px;color:#262626;font-weight:400;white-space:pre;">Створити</div>
<div id="t51" class="t" style="transform:scaleX(0.9202);left:1492px;top:175.25px;font-family:'Liberation Sans',sans-serif;font-size:15px;line-height:15px;color:#262626;font-weight:400;white-space:pre;">PDF-файл</div>
<div id="t52" class="t" style="transform:scaleX(0.9689);left:1481px;top:205.60px;font-family:'Liberation Sans',sans-serif;font-size:14px;line-height:14px;color:#262626;font-weight:400;white-space:pre;">Adobe Acrobat</div>
<svg style="left:1592px;top:108px;" width="40" height="40" viewBox="0 0 40 40"><path d="M6 3 H26 L31 8 V36 H6 Z" fill="#fff" stroke="#444" stroke-width="1.5"/><rect x="1.5" y="7" width="22" height="12" fill="#e8414b"/><text x="3.2" y="17" font-family="Liberation Sans" font-weight="bold" font-size="10" fill="#fff">PDF</text><circle cx="29" cy="30" r="7.2" fill="#fff" stroke="#444" stroke-width="1.5"/><path d="M29 26 V34 M25 30 H33" stroke="#444" stroke-width="1.4"/></svg>
<div id="t53" class="t" style="transform:scaleX(0.9549);left:1589px;top:154.25px;font-family:'Liberation Sans',sans-serif;font-size:15px;line-height:15px;color:#262626;font-weight:400;white-space:pre;">Create</div>
<div id="t54" class="t" style="left:1598.5px;top:175.25px;font-family:'Liberation Sans',sans-serif;font-size:15px;line-height:15px;color:#262626;font-weight:400;white-space:pre;">P</div>
<svg style="left:1648px;top:108px;" width="40" height="40" viewBox="0 0 40 40"><path d="M22 4 L37 19 L31 25 L16 10 Z" fill="#fff" stroke="#444" stroke-width="1.5"/><path d="M16 10 L6 14 L2 36 L24 32 L31 25" fill="#fff" stroke="#444" stroke-width="1.5"/><path d="M2.5 35.5 L13.5 23" stroke="#e0414b" stroke-width="1.5"/><circle cx="15.5" cy="20.5" r="3" fill="none" stroke="#e0414b" stroke-width="1.5"/></svg>
<div id="t55" class="t" style="transform:scaleX(0.9823);left:1652px;top:154.25px;font-family:'Liberation Sans',sans-serif;font-size:15px;line-height:15px;color:#262626;font-weight:400;white-space:pre;">Sign</div>
<svg style="left:1736px;top:108px;" width="40" height="40" viewBox="0 0 40 40"><rect x="2" y="2" width="35" height="35" fill="#fff" stroke="#d84f2a" stroke-width="1.8"/><rect x="6" y="6" width="12" height="12" fill="#fdf3e0" stroke="#d84f2a" stroke-width="1.6"/><rect x="21" y="6" width="12" height="12" fill="#fdf3e0" stroke="#d84f2a" stroke-width="1.6"/><rect x="6" y="21" width="12" height="12" fill="#fdf3e0" stroke="#d84f2a" stroke-width="1.6"/><rect x="21" y="21" width="12" height="12" fill="#fdf3e0" stroke="#d84f2a" stroke-width="1.6"/></svg>
<div id="t56" class="t" style="transform:scaleX(1.0112);left:1717px;top:154.25px;font-family:'Liberation Sans',sans-serif;font-size:15px;line-height:15px;color:#262626;font-weight:400;white-space:pre;">Надбудови</div>
<div id="t57" class="t" style="left:62.5px;top:246.50px;font-family:'Liberation Sans',sans-serif;font-size:18px;line-height:18px;color:#444;font-weight:400;white-space:pre;">1</div>
<div id="t58" class="t" style="left:62.5px;top:382.00px;font-family:'Liberation Sans',sans-serif;font-size:18px;line-height:18px;color:#c4432b;font-weight:400;white-space:pre;">2</div>
<div id="t59" class="t" style="left:62.5px;top:517.50px;font-family:'Liberation Sans',sans-serif;font-size:18px;line-height:18px;color:#444;font-weight:400;white-space:pre;">3</div>
<div id="t60" class="t" style="left:62.5px;top:653.30px;font-family:'Liberation Sans',sans-serif;font-size:18px;line-height:18px;color:#444;font-weight:400;white-space:pre;">4</div>
<div id="t61" class="t" style="left:62.5px;top:788.90px;font-family:'Liberation Sans',sans-serif;font-size:18px;line-height:18px;color:#444;font-weight:400;white-space:pre;">5</div>
<div id="t62" class="t" style="left:62.5px;top:924.50px;font-family:'Liberation Sans',sans-serif;font-size:18px;line-height:18px;color:#444;font-weight:400;white-space:pre;">6</div>
<svg style="left:314.5px;top:231px;" width="12" height="10" viewBox="0 0 12 10"><path d="M1.5 8.5 L6 2 L10.5 8.5 Z" fill="#6e6e6e" stroke="#6e6e6e" stroke-width="1.5" stroke-linejoin="round"/></svg>
<div style="left:316px;top:247.5px;width:10px;height:512.5px;background:#6e6e6f;border-radius:5px;"></div>
<div style="left:608px;top:364px;width:970px;height:546px;overflow:hidden;"><div style="position:absolute;left:96.8px;top:70.78px;font-family:'Liberation Serif',serif;font-size:24.6px;line-height:24.6px;font-weight:700;color:#000;white-space:pre;transform:scaleX(0.975);transform-origin:0 0;">Мета</div><div style="position:absolute;left:96.8px;top:99.48px;width:729.5px;font-family:'Liberation Serif',serif;font-size:24.6px;line-height:24.6px;font-weight:400;color:#000;text-align:justify;text-align-last:justify;white-space:normal;">Підтримка наукової активності молодих вчених, аспірантів і</div><div style="position:absolute;left:96.8px;top:128.28px;font-family:'Liberation Serif',serif;font-size:24.6px;line-height:24.6px;font-weight:400;color:#000;white-space:pre;">студентів факультету ветеринарної медицини НУБіП України</div><div style="position:absolute;left:96.8px;top:215.98px;font-family:'Liberation Serif',serif;font-size:24.6px;line-height:24.6px;font-weight:700;color:#000;white-space:pre;transform:scaleX(0.985);transform-origin:0 0;">Основні завдання</div><svg style="position:absolute;left:98.6px;top:275.3px" width="16.8" height="15.6" viewBox="0 0 16 15"><path d="M0.2 8.4 L2.3 7.3 L5.1 10.9 C7.6 6.4 11.2 2.4 15.8 0.2 L16 0.9 C11.8 4.1 8.4 8.6 5.8 14.7 L4.5 14.7 Z" fill="#000"/></svg><div style="position:absolute;left:127px;top:274.48px;font-family:'Liberation Serif',serif;font-size:24.6px;line-height:24.6px;font-weight:400;color:#000;white-space:pre;">залучення аспірантів до наукових заходів факультету;</div><svg style="position:absolute;left:98.6px;top:333.5px" width="16.8" height="15.6" viewBox="0 0 16 15"><path d="M0.2 8.4 L2.3 7.3 L5.1 10.9 C7.6 6.4 11.2 2.4 15.8 0.2 L16 0.9 C11.8 4.1 8.4 8.6 5.8 14.7 L4.5 14.7 Z" fill="#000"/></svg><div style="position:absolute;left:127px;top:332.78px;width:697.5px;font-family:'Liberation Serif',serif;font-size:24.6px;line-height:24.6px;font-weight:400;color:#000;text-align:justify;text-align-last:justify;white-space:normal;">налагодження комунікації між молодими вченими, аспірантами та</div><div style="position:absolute;left:127px;top:361.58px;font-family:'Liberation Serif',serif;font-size:24.6px;line-height:24.6px;font-weight:400;color:#000;white-space:pre;">студентами;</div><svg style="position:absolute;left:98.6px;top:421.1px" width="16.8" height="15.6" viewBox="0 0 16 15"><path d="M0.2 8.4 L2.3 7.3 L5.1 10.9 C7.6 6.4 11.2 2.4 15.8 0.2 L16 0.9 C11.8 4.1 8.4 8.6 5.8 14.7 L4.5 14.7 Z" fill="#000"/></svg><div style="position:absolute;left:127px;top:420.38px;font-family:'Liberation Serif',serif;font-size:24.6px;line-height:24.6px;font-weight:400;color:#000;white-space:pre;">популяризація наукової діяльності у межах факультету.</div></div>
<div style="left:93px;top:251px;width:191.5px;height:108px;background:#f8f5e7;border-radius:4px;overflow:hidden;box-shadow:0 0 0 1px #cfcfcf,0 1px 2px rgba(0,0,0,0.15);"><div style="position:absolute;left:0;top:0;width:970px;height:546px;transform:scale(0.1975);transform-origin:0 0;"><div style="position:absolute;left:0;top:0;width:207px;height:546px;background:#0b57ab"></div><svg style="position:absolute;left:38px;top:188px" width="126" height="200" viewBox="0 0 126 200"><path d="M6 6 H120 V120 C120 160 90 185 63 196 C36 185 6 160 6 120 Z" fill="#0b57ab" stroke="#f1e31c" stroke-width="7"/><g fill="#c9cf3a"><ellipse cx="63" cy="45" rx="7" ry="20"/><ellipse cx="40" cy="62" rx="6" ry="18" transform="rotate(-35 40 62)"/><ellipse cx="86" cy="62" rx="6" ry="18" transform="rotate(35 86 62)"/><rect x="59" y="60" width="8" height="60"/><path d="M45 120 L63 95 L81 120 Z"/></g><text x="22" y="152" font-family="Liberation Sans" font-weight="bold" font-size="23" fill="#e8e21c">НУБіП</text><text x="48" y="176" font-family="Liberation Sans" font-size="12" fill="#e8e21c">1898</text></svg><div style="position:absolute;left:0;top:0;width:970px;height:546px;background:radial-gradient(ellipse at 60% 50%, #fcf9f0 0%, #f6f0e0 100%);clip-path:inset(0 0 0 207px)"></div><svg style="position:absolute;left:311px;top:78px" width="514" height="470" viewBox="0 0 514 470"><path d="M2 458 V255 A255 255 0 0 1 512 255 V458 Z" fill="#fdfaf3" stroke="#111" stroke-width="5"/></svg><div style="position:absolute;left:242px;top:16.48px;font-family:'Liberation Serif',serif;font-size:17.5px;line-height:17.5px;font-weight:700;font-style:italic;color:#000;white-space:pre;transform:scaleX(1.25);transform-origin:0 0;">Національний університет біоресурсів і природокористування України</div><div style="position:absolute;left:413px;top:61.48px;font-family:'Liberation Serif',serif;font-size:17.5px;line-height:17.5px;font-weight:700;font-style:italic;color:#000;white-space:pre;transform:scaleX(1.24);transform-origin:0 0;">Факультет ветеринарної медицини</div><div style="position:absolute;left:388px;top:161.22px;font-family:'Liberation Serif',serif;font-size:66px;line-height:66px;font-weight:400;font-style:italic;color:#1a1a2a;white-space:pre;transform:scaleX(0.89);transform-origin:0 0;">Рада молодих</div><div style="position:absolute;left:473px;top:249.22px;font-family:'Liberation Serif',serif;font-size:66px;line-height:66px;font-weight:400;font-style:italic;color:#1a1a2a;white-space:pre;transform:scaleX(0.97);transform-origin:0 0;">вчених</div><div style="position:absolute;left:400px;top:320px;width:328px;height:6px;background:#777"></div><div style="position:absolute;left:461px;top:373.23px;font-family:'Liberation Serif',serif;font-size:19px;line-height:19px;font-weight:400;font-style:italic;color:#555;white-space:pre;transform:scaleX(1.12);transform-origin:0 0;">Стефанський резюме</div><div style="position:absolute;left:461px;top:446px;width:184px;height:5px;background:#222"></div></div></div>
<div style="left:87.5px;top:381px;width:201.5px;height:118.5px;background:#7b0a14;border-radius:7px;"></div>
<div style="left:91.5px;top:385px;width:193.5px;height:110.5px;background:#f8f5e7;border-radius:4px;overflow:hidden;"><div style="position:absolute;left:0;top:0;width:970px;height:546px;transform:scale(0.1995);transform-origin:0 0;"><div style="position:absolute;left:96.8px;top:70.78px;font-family:'Liberation Serif',serif;font-size:24.6px;line-height:24.6px;font-weight:700;color:#000;white-space:pre;transform:scaleX(0.975);transform-origin:0 0;">Мета</div><div style="position:absolute;left:96.8px;top:99.48px;width:729.5px;font-family:'Liberation Serif',serif;font-size:24.6px;line-height:24.6px;font-weight:400;color:#000;text-align:justify;text-align-last:justify;white-space:normal;">Підтримка наукової активності молодих вчених, аспірантів і</div><div style="position:absolute;left:96.8px;top:128.28px;font-family:'Liberation Serif',serif;font-size:24.6px;line-height:24.6px;font-weight:400;color:#000;white-space:pre;">студентів факультету ветеринарної медицини НУБіП України</div><div style="position:absolute;left:96.8px;top:215.98px;font-family:'Liberation Serif',serif;font-size:24.6px;line-height:24.6px;font-weight:700;color:#000;white-space:pre;transform:scaleX(0.985);transform-origin:0 0;">Основні завдання</div><svg style="position:absolute;left:98.6px;top:275.3px" width="16.8" height="15.6" viewBox="0 0 16 15"><path d="M0.2 8.4 L2.3 7.3 L5.1 10.9 C7.6 6.4 11.2 2.4 15.8 0.2 L16 0.9 C11.8 4.1 8.4 8.6 5.8 14.7 L4.5 14.7 Z" fill="#000"/></svg><div style="position:absolute;left:127px;top:274.48px;font-family:'Liberation Serif',serif;font-size:24.6px;line-height:24.6px;font-weight:400;color:#000;white-space:pre;">залучення аспірантів до наукових заходів факультету;</div><svg style="position:absolute;left:98.6px;top:333.5px" width="16.8" height="15.6" viewBox="0 0 16 15"><path d="M0.2 8.4 L2.3 7.3 L5.1 10.9 C7.6 6.4 11.2 2.4 15.8 0.2 L16 0.9 C11.8 4.1 8.4 8.6 5.8 14.7 L4.5 14.7 Z" fill="#000"/></svg><div style="position:absolute;left:127px;top:332.78px;width:697.5px;font-family:'Liberation Serif',serif;font-size:24.6px;line-height:24.6px;font-weight:400;color:#000;text-align:justify;text-align-last:justify;white-space:normal;">налагодження комунікації між молодими вченими, аспірантами та</div><div style="position:absolute;left:127px;top:361.58px;font-family:'Liberation Serif',serif;font-size:24.6px;line-height:24.6px;font-weight:400;color:#000;white-space:pre;">студентами;</div><svg style="position:absolute;left:98.6px;top:421.1px" width="16.8" height="15.6" viewBox="0 0 16 15"><path d="M0.2 8.4 L2.3 7.3 L5.1 10.9 C7.6 6.4 11.2 2.4 15.8 0.2 L16 0.9 C11.8 4.1 8.4 8.6 5.8 14.7 L4.5 14.7 Z" fill="#000"/></svg><div style="position:absolute;left:127px;top:420.38px;font-family:'Liberation Serif',serif;font-size:24.6px;line-height:24.6px;font-weight:400;color:#000;white-space:pre;">популяризація наукової діяльності у межах факультету.</div></div></div>
<div style="left:91.75px;top:521px;width:192.75px;height:109.5px;background:#f8f5e7;border-radius:4px;overflow:hidden;box-shadow:0 0 0 1px #cfcfcf,0 1px 2px rgba(0,0,0,0.15);"><div style="position:absolute;left:0;top:0;width:970px;height:546px;transform:scale(0.1985);transform-origin:0 0;"><div style="position:absolute;left:405px;top:42.57px;font-family:'Liberation Serif',serif;font-size:21px;line-height:21px;font-weight:700;color:#000;white-space:pre;">Основні напрями розвитку</div><svg style="position:absolute;left:120px;top:72px" width="80" height="70" viewBox="0 4.8 80 70.4"><polygon points="75.0,40.0 57.5,70.3 22.5,70.3 5.0,40.0 22.5,9.7 57.5,9.7" fill="#fff" stroke="#b5253a" stroke-width="9"/><rect x="28.0" y="26.0" width="22" height="28" fill="none" stroke="#555" stroke-width="3"/><path d="M33.0 35.0 H45.0 M33.0 42.0 H45.0 M33.0 48.0 H43.0" stroke="#555" stroke-width="2.5"/></svg><div style="position:absolute;left:223px;top:97.57px;font-family:'Liberation Serif',serif;font-size:21px;line-height:21px;font-weight:400;color:#333;white-space:pre;">Науково-дослідна діяльність</div><svg style="position:absolute;left:120px;top:155px" width="80" height="70" viewBox="0 4.8 80 70.4"><polygon points="75.0,40.0 57.5,70.3 22.5,70.3 5.0,40.0 22.5,9.7 57.5,9.7" fill="#fff" stroke="#cf5a2c" stroke-width="9"/><rect x="28.0" y="26.0" width="22" height="28" fill="none" stroke="#555" stroke-width="3"/><path d="M33.0 35.0 H45.0 M33.0 42.0 H45.0 M33.0 48.0 H43.0" stroke="#555" stroke-width="2.5"/></svg><div style="position:absolute;left:223px;top:180.57px;font-family:'Liberation Serif',serif;font-size:21px;line-height:21px;font-weight:400;color:#333;white-space:pre;">Організаційна діяльність та комунікація</div><svg style="position:absolute;left:120px;top:241px" width="80" height="70" viewBox="0 4.8 80 70.4"><polygon points="75.0,40.0 57.5,70.3 22.5,70.3 5.0,40.0 22.5,9.7 57.5,9.7" fill="#fff" stroke="#e49a2b" stroke-width="9"/><rect x="28.0" y="26.0" width="22" height="28" fill="none" stroke="#555" stroke-width="3"/><path d="M33.0 35.0 H45.0 M33.0 42.0 H45.0 M33.0 48.0 H43.0" stroke="#555" stroke-width="2.5"/></svg><div style="position:absolute;left:223px;top:266.57px;font-family:'Liberation Serif',serif;font-size:21px;line-height:21px;font-weight:400;color:#333;white-space:pre;">Співпраця з аспірантами</div><svg style="position:absolute;left:120px;top:327px" width="80" height="70" viewBox="0 4.8 80 70.4"><polygon points="75.0,40.0 57.5,70.3 22.5,70.3 5.0,40.0 22.5,9.7 57.5,9.7" fill="#fff" stroke="#e8a52e" stroke-width="9"/><rect x="28.0" y="26.0" width="22" height="28" fill="none" stroke="#555" stroke-width="3"/><path d="M33.0 35.0 H45.0 M33.0 42.0 H45.0 M33.0 48.0 H43.0" stroke="#555" stroke-width="2.5"/></svg><div style="position:absolute;left:223px;top:352.57px;font-family:'Liberation Serif',serif;font-size:21px;line-height:21px;font-weight:400;color:#333;white-space:pre;">Співпраця зі студентами</div></div></div>
<div style="left:92px;top:657px;width:192.75px;height:109.5px;background:#f8f5e7;border-radius:4px;overflow:hidden;box-shadow:0 0 0 1px #cfcfcf,0 1px 2px rgba(0,0,0,0.15);"><div style="position:absolute;left:0;top:0;width:970px;height:546px;transform:scale(0.1985);transform-origin:0 0;"><svg style="position:absolute;left:64px;top:38px" width="80" height="70" viewBox="0 4.8 80 70.4"><polygon points="75.0,40.0 57.5,70.3 22.5,70.3 5.0,40.0 22.5,9.7 57.5,9.7" fill="#fff" stroke="#b5253a" stroke-width="9"/><rect x="28.0" y="26.0" width="22" height="28" fill="none" stroke="#555" stroke-width="3"/><path d="M33.0 35.0 H45.0 M33.0 42.0 H45.0 M33.0 48.0 H43.0" stroke="#555" stroke-width="2.5"/></svg><div style="position:absolute;left:332px;top:73.57px;font-family:'Liberation Serif',serif;font-size:21px;line-height:21px;font-weight:700;color:#000;white-space:pre;">Науково-дослідна діяльність</div><svg style="position:absolute;left:75px;top:136px" width="14" height="13" viewBox="0 0 16 15"><path d="M0.2 8.4 L2.3 7.3 L5.1 10.9 C7.6 6.4 11.2 2.4 15.8 0.2 L16 0.9 C11.8 4.1 8.4 8.6 5.8 14.7 L4.5 14.7 Z" fill="#000"/></svg><div style="position:absolute;left:107px;top:132.40px;width:802px;font-family:'Liberation Serif',serif;font-size:20px;line-height:20px;font-weight:400;color:#000;text-align:justify;text-align-last:justify;white-space:normal;">інформування молодих вчених про наукові конференції та публікаційні</div><div style="position:absolute;left:107px;top:157.40px;font-family:'Liberation Serif',serif;font-size:20px;line-height:20px;font-weight:400;color:#333;white-space:pre;">можливості;</div><svg style="position:absolute;left:75px;top:221px" width="14" height="13" viewBox="0 0 16 15"><path d="M0.2 8.4 L2.3 7.3 L5.1 10.9 C7.6 6.4 11.2 2.4 15.8 0.2 L16 0.9 C11.8 4.1 8.4 8.6 5.8 14.7 L4.5 14.7 Z" fill="#000"/></svg><div style="position:absolute;left:107px;top:217.40px;font-family:'Liberation Serif',serif;font-size:20px;line-height:20px;font-weight:400;color:#333;white-space:pre;">консультаційна підтримка з підготовки тез і статей;</div><svg style="position:absolute;left:75px;top:277px" width="14" height="13" viewBox="0 0 16 15"><path d="M0.2 8.4 L2.3 7.3 L5.1 10.9 C7.6 6.4 11.2 2.4 15.8 0.2 L16 0.9 C11.8 4.1 8.4 8.6 5.8 14.7 L4.5 14.7 Z" fill="#000"/></svg><div style="position:absolute;left:107px;top:273.40px;font-family:'Liberation Serif',serif;font-size:20px;line-height:20px;font-weight:400;color:#333;white-space:pre;">організація одного внутрішнього наукового заходу на рік.</div><div style="position:absolute;left:75px;top:459.40px;font-family:'Liberation Serif',serif;font-size:20px;line-height:20px;font-weight:700;font-style:italic;color:#111;white-space:pre;">Відповідальна особа: заступник голови Ради з наукової роботи</div></div></div>
<div style="left:92px;top:792.5px;width:192.75px;height:109.5px;background:#f8f5e7;border-radius:4px;overflow:hidden;box-shadow:0 0 0 1px #cfcfcf,0 1px 2px rgba(0,0,0,0.15);"><div style="position:absolute;left:0;top:0;width:970px;height:546px;transform:scale(0.1985);transform-origin:0 0;"><svg style="position:absolute;left:64px;top:40px" width="80" height="70" viewBox="0 4.8 80 70.4"><polygon points="75.0,40.0 57.5,70.3 22.5,70.3 5.0,40.0 22.5,9.7 57.5,9.7" fill="#fff" stroke="#cf5a2c" stroke-width="9"/><rect x="28.0" y="26.0" width="22" height="28" fill="none" stroke="#555" stroke-width="3"/><path d="M33.0 35.0 H45.0 M33.0 42.0 H45.0 M33.0 48.0 H43.0" stroke="#555" stroke-width="2.5"/></svg><div style="position:absolute;left:261px;top:70.57px;font-family:'Liberation Serif',serif;font-size:21px;line-height:21px;font-weight:700;color:#000;white-space:pre;">Організаційна діяльність та комунікація</div><svg style="position:absolute;left:75px;top:133px" width="14" height="13" viewBox="0 0 16 15"><path d="M0.2 8.4 L2.3 7.3 L5.1 10.9 C7.6 6.4 11.2 2.4 15.8 0.2 L16 0.9 C11.8 4.1 8.4 8.6 5.8 14.7 L4.5 14.7 Z" fill="#000"/></svg><div style="position:absolute;left:92px;top:129.40px;font-family:'Liberation Serif',serif;font-size:20px;line-height:20px;font-weight:400;color:#333;white-space:pre;">регулярна комунікація з цільовою аудиторією;</div><svg style="position:absolute;left:75px;top:188px" width="14" height="13" viewBox="0 0 16 15"><path d="M0.2 8.4 L2.3 7.3 L5.1 10.9 C7.6 6.4 11.2 2.4 15.8 0.2 L16 0.9 C11.8 4.1 8.4 8.6 5.8 14.7 L4.5 14.7 Z" fill="#000"/></svg><div style="position:absolute;left:92px;top:184.90px;font-family:'Liberation Serif',serif;font-size:20px;line-height:20px;font-weight:400;color:#333;white-space:pre;">розміщення оголошень, інформації про заходи та коротких звітів;</div><svg style="position:absolute;left:75px;top:244px" width="14" height="13" viewBox="0 0 16 15"><path d="M0.2 8.4 L2.3 7.3 L5.1 10.9 C7.6 6.4 11.2 2.4 15.8 0.2 L16 0.9 C11.8 4.1 8.4 8.6 5.8 14.7 L4.5 14.7 Z" fill="#000"/></svg><div style="position:absolute;left:92px;top:240.40px;font-family:'Liberation Serif',serif;font-size:20px;line-height:20px;font-weight:400;color:#333;white-space:pre;">підготовка річного звіту про діяльність Ради.</div><div style="position:absolute;left:75px;top:459.40px;font-family:'Liberation Serif',serif;font-size:20px;line-height:20px;font-weight:700;font-style:italic;color:#111;white-space:pre;">Відповідальна особа: заступник голови Ради з організаційної роботи</div></div></div>
<div style="left:92px;top:928.7px;width:192.75px;height:85px;background:#f8f5e7;border-radius:4px 4px 0 0;overflow:hidden;box-shadow:0 0 0 1px #cfcfcf,0 1px 2px rgba(0,0,0,0.15);"><div style="position:absolute;left:0;top:0;width:970px;height:546px;transform:scale(0.1985);transform-origin:0 0;"><svg style="position:absolute;left:64px;top:24px" width="80" height="70" viewBox="0 4.8 80 70.4"><polygon points="75.0,40.0 57.5,70.3 22.5,70.3 5.0,40.0 22.5,9.7 57.5,9.7" fill="#fff" stroke="#e49a2b" stroke-width="9"/><rect x="28.0" y="26.0" width="22" height="28" fill="none" stroke="#555" stroke-width="3"/><path d="M33.0 35.0 H45.0 M33.0 42.0 H45.0 M33.0 48.0 H43.0" stroke="#555" stroke-width="2.5"/></svg><div style="position:absolute;left:347px;top:57.07px;font-family:'Liberation Serif',serif;font-size:21px;line-height:21px;font-weight:700;color:#000;white-space:pre;">Співпраця з аспірантами</div><svg style="position:absolute;left:75px;top:114px" width="14" height="13" viewBox="0 0 16 15"><path d="M0.2 8.4 L2.3 7.3 L5.1 10.9 C7.6 6.4 11.2 2.4 15.8 0.2 L16 0.9 C11.8 4.1 8.4 8.6 5.8 14.7 L4.5 14.7 Z" fill="#000"/></svg><div style="position:absolute;left:92px;top:110.90px;font-family:'Liberation Serif',serif;font-size:20px;line-height:20px;font-weight:400;color:#333;white-space:pre;">налагодження постійного контакту з аспірантами факультету;</div><svg style="position:absolute;left:75px;top:172px" width="14" height="13" viewBox="0 0 16 15"><path d="M0.2 8.4 L2.3 7.3 L5.1 10.9 C7.6 6.4 11.2 2.4 15.8 0.2 L16 0.9 C11.8 4.1 8.4 8.6 5.8 14.7 L4.5 14.7 Z" fill="#000"/></svg><div style="position:absolute;left:92px;top:168.40px;font-family:'Liberation Serif',serif;font-size:20px;line-height:20px;font-weight:400;color:#333;white-space:pre;">інформування про наукові заходи та подвійні;</div><svg style="position:absolute;left:75px;top:230px" width="14" height="13" viewBox="0 0 16 15"><path d="M0.2 8.4 L2.3 7.3 L5.1 10.9 C7.6 6.4 11.2 2.4 15.8 0.2 L16 0.9 C11.8 4.1 8.4 8.6 5.8 14.7 L4.5 14.7 Z" fill="#000"/></svg><div style="position:absolute;left:92px;top:226.40px;font-family:'Liberation Serif',serif;font-size:20px;line-height:20px;font-weight:400;color:#333;white-space:pre;">залучення аспірантів до участі в заходах Ради;</div><svg style="position:absolute;left:75px;top:286px" width="14" height="13" viewBox="0 0 16 15"><path d="M0.2 8.4 L2.3 7.3 L5.1 10.9 C7.6 6.4 11.2 2.4 15.8 0.2 L16 0.9 C11.8 4.1 8.4 8.6 5.8 14.7 L4.5 14.7 Z" fill="#000"/></svg><div style="position:absolute;left:92px;top:282.40px;font-family:'Liberation Serif',serif;font-size:20px;line-height:20px;font-weight:400;color:#333;white-space:pre;">збір пропозицій та питань аспірантів.</div></div></div>
<div style="left:1605px;top:171px;width:287.5px;height:809.5px;background:#1f1f1f;border-radius:2px;box-shadow:-2px 3px 7px rgba(0,0,0,0.32), 0 0 0 1px #1a1a1a;"></div>
<div id="t63" class="t" style="transform:scaleX(1.0651);left:1672.5px;top:243.30px;font-family:'Liberation Sans',sans-serif;font-size:22px;line-height:22px;color:#ececec;font-weight:700;white-space:pre;">Iryna Derkach</div>
<div style="left:1609px;top:308.3px;width:129px;height:24.8px;background:#2d2d2d;"></div>
<svg style="left:1613.5px;top:312.5px;" width="18" height="18" viewBox="0 0 18 18"><rect x="5" y="0.5" width="6.5" height="12.5" rx="3.2" fill="#f25c5c"/><rect x="5" y="14.5" width="6.3" height="2" fill="#f25c5c"/><path d="M8 12 V15" stroke="#f25c5c" stroke-width="1.5"/><path d="M0.8 16 L16.5 0.8" stroke="#2d2d2d" stroke-width="3.2"/><path d="M0.8 16 L16.5 0.8" stroke="#f25c5c" stroke-width="1.6" stroke-linecap="round"/></svg>
<div id="t64" class="t" style="transform:scaleX(0.9898);left:1637.5px;top:313.62px;font-family:'Liberation Sans',sans-serif;font-size:15.5px;line-height:15.5px;color:#f0f0f0;font-weight:400;white-space:pre;">Iryna Derkach</div>
<svg style="left:1609px;top:336px" width="280" height="158" viewBox="0 0 280 158"><defs><filter id="bl1" x="-20%" y="-20%" width="140%" height="140%"><feGaussianBlur stdDeviation="2"/></filter><filter id="bl2" x="-20%" y="-20%" width="140%" height="140%"><feGaussianBlur stdDeviation="1.3"/></filter>
<linearGradient id="yb" x1="0" x2="1"><stop offset="0" stop-color="#d8d8da"/><stop offset="0.08" stop-color="#e8e8ea"/><stop offset="0.3" stop-color="#efeff0"/><stop offset="0.6" stop-color="#ebebed"/><stop offset="0.85" stop-color="#e6e5e6"/><stop offset="0.91" stop-color="#4d423d"/><stop offset="1" stop-color="#1e1917"/></linearGradient>
<linearGradient id="yf" x1="0" y1="0" x2="0" y2="1"><stop offset="0" stop-color="#c6aea8"/><stop offset="0.5" stop-color="#b4948d"/><stop offset="1" stop-color="#b18e88"/></linearGradient></defs>
<rect width="280" height="158" fill="url(#yb)"/>
<g filter="url(#bl1)">
<path d="M35 158 C55 138 80 125 98 118 C92 95 90 60 96 35 C102 12 120 0 142 0 C165 0 180 10 188 35 C195 60 198 85 210 110 C222 132 238 145 246 158 Z" fill="#5a4840"/>
<path d="M80 158 C95 140 115 126 132 123 L190 123 C212 128 228 145 236 158 Z" fill="#d3cac7"/>
</g>
<g filter="url(#bl2)">
<path d="M106 45 C106 22 122 14 143 14 C165 14 180 24 182 45 C184 70 180 95 170 112 C162 122 152 126 143 126 C132 126 120 118 113 105 C107 92 106 65 106 45 Z" fill="url(#yf)"/>
<path d="M98 30 C104 8 125 2 143 2 C160 2 178 10 186 28 C190 45 190 65 194 90 C186 65 182 42 175 30 C168 20 158 17 150 22 L145 12 C130 14 115 22 105 52 Z" fill="#5a4840"/>
<ellipse cx="122" cy="60" rx="7.5" ry="2.8" fill="#7e605b"/><ellipse cx="159" cy="57" rx="7.5" ry="2.8" fill="#7e605b"/>
<path d="M140 64 L138 79 L146 81" fill="none" stroke="#9c7c76" stroke-width="1.5"/>
<ellipse cx="141" cy="96" rx="11" ry="3.8" fill="#9b6f6b"/>
</g></svg>
<div style="left:1608px;top:335px;width:282px;height:160px;background:transparent;border:1.8px solid #86c22c;box-sizing:border-box;"></div>
<div style="left:1610px;top:470px;width:138px;height:24px;background:rgba(40,40,40,0.72);"></div>
<div id="t65" class="t" style="left:1614px;top:475.02px;font-family:'Liberation Sans',sans-serif;font-size:15.5px;line-height:15.5px;color:#f0f0f0;font-weight:400;white-space:pre;">Yuliia Paramonova</div>
<svg style="left:1609px;top:497px" width="280" height="158" viewBox="0 0 280 158"><defs><filter id="bl3" x="-10%" y="-10%" width="120%" height="120%"><feGaussianBlur stdDeviation="1.2"/></filter><filter id="bl4" x="-10%" y="-10%" width="120%" height="120%"><feGaussianBlur stdDeviation="1"/></filter></defs>
<rect width="280" height="158" fill="#e0dcd3"/>
<g filter="url(#bl3)">
<rect x="-5" y="14" width="93" height="117" fill="#c9aa8b"/>
<path d="M18 14 V131" stroke="#b9997b" stroke-width="2"/>
<path d="M0 129 H90" stroke="#a88a70" stroke-width="3"/>
<rect x="178" y="20" width="64" height="112" fill="#b89878"/>
<rect x="186" y="29" width="48" height="102" fill="#c8a98a"/>
<rect x="89" y="58" width="29" height="37" fill="#d4d8dc"/>
<path d="M92 70 L110 62 L112 90 L95 92 Z" fill="#e8eaec"/>
<path d="M58 158 C60 135 68 122 100 114 C115 110 125 108 133 106 L175 106 C195 106 225 112 248 120 C258 128 262 142 266 158 Z" fill="#3b4b48"/>
<path d="M128 158 L131 118 L182 118 L184 158 Z" fill="#151716"/>
</g>
<g filter="url(#bl4)">
<ellipse cx="115" cy="74" rx="4" ry="9" fill="#c9a290"/><ellipse cx="190" cy="74" rx="4" ry="9" fill="#c9a290"/>
<path d="M116 58 C114 28 130 12 152 12 C176 12 192 28 190 58 L186 44 C180 30 128 28 120 48 Z" fill="#4c4844"/>
<path d="M118 52 C118 30 132 22 152 22 C172 22 187 30 187 52 C187 80 185 100 178 112 C170 121 162 124 152 124 C142 124 133 120 127 112 C120 100 118 78 118 52 Z" fill="#d6b2a1"/>
<path d="M128 98 C130 112 140 123 152 123 C165 123 174 112 177 98 C172 104 165 103 152 103 C139 103 133 104 128 98 Z" fill="#97867a"/>
<path d="M139 96 C145 92 160 92 166 96" stroke="#6f5a4c" stroke-width="3" fill="none"/>
<ellipse cx="135" cy="66" rx="6.5" ry="2.4" fill="#4d3a30"/><ellipse cx="167" cy="66" rx="6.5" ry="2.4" fill="#4d3a30"/>
<path d="M126 58 L143 57 M159 57 L177 59" stroke="#5a4a40" stroke-width="2.5"/>
<path d="M152 66 L149 84 L156 85" fill="none" stroke="#b88e7c" stroke-width="1.6"/>
</g></svg>
<div style="left:1609px;top:631px;width:225px;height:24px;background:rgba(30,30,30,0.72);"></div>
<div id="t66" class="t" style="transform:scaleX(1.0056);left:1615px;top:635.83px;font-family:'Liberation Sans',sans-serif;font-size:15.5px;line-height:15.5px;color:#f0f0f0;font-weight:400;white-space:pre;">Роман Олександрович Димко</div>
<div id="t67" class="t" style="transform:scaleX(1.1138);left:1677.5px;top:726.60px;font-family:'Liberation Sans',sans-serif;font-size:22px;line-height:22px;color:#ececec;font-weight:700;white-space:pre;">Грищук Ігор</div>
<div style="left:1609px;top:791.8px;width:120px;height:24px;background:#2d2d2d;"></div>
<svg style="left:1613.5px;top:795.8px;" width="18" height="18" viewBox="0 0 18 18"><rect x="5" y="0.5" width="6.5" height="12.5" rx="3.2" fill="#f25c5c"/><rect x="5" y="14.5" width="6.3" height="2" fill="#f25c5c"/><path d="M8 12 V15" stroke="#f25c5c" stroke-width="1.5"/><path d="M0.8 16 L16.5 0.8" stroke="#2d2d2d" stroke-width="3.2"/><path d="M0.8 16 L16.5 0.8" stroke="#f25c5c" stroke-width="1.6" stroke-linecap="round"/></svg>
<div id="t68" class="t" style="transform:scaleX(1.0367);left:1637.5px;top:796.43px;font-family:'Liberation Sans',sans-serif;font-size:15.5px;line-height:15.5px;color:#f0f0f0;font-weight:400;white-space:pre;">Грищук Ігор</div>
<div style="left:1609px;top:817.5px;width:280px;height:1px;background:#262626;"></div>
<svg style="left:1704px;top:819px" width="89" height="158" viewBox="0 0 89 158"><defs><filter id="bl5" x="-10%" y="-10%" width="120%" height="120%"><feGaussianBlur stdDeviation="0.9"/></filter></defs>
<rect width="89" height="158" fill="#e9e1d9"/>
<path d="M0 0 H89 V27 H14 L0 4 Z" fill="#ddd6d1"/>
<path d="M0 4 L14 27 L13 85 L0 100 Z" fill="#e2d8ce"/>
<g filter="url(#bl5)">
<path d="M0 100 C-2 62 8 34 30 33 C50 32 62 48 63 74 C64 88 62 98 57 104 L30 108 L0 110 Z" fill="#85695a"/>
<path d="M3 68 C3 54 12 47 25 47 C38 47 46 56 46 70 C46 88 38 100 26 100 C13 100 3 88 3 68 Z" fill="#d3a999"/>
<path d="M10 72 L20 73 M30 71 L40 69" stroke="#86685a" stroke-width="1.6"/>
<ellipse cx="24" cy="91" rx="5" ry="1.8" fill="#a87a70"/>
<path d="M0 96 C12 100 32 96 50 98 C68 100 82 112 89 126 V158 H0 Z" fill="#2d4c97"/>
<path d="M14 100 L42 98 L36 115 L20 115 Z" fill="#141414"/>
<path d="M58 118 C68 128 78 143 84 158 L62 158 C58 145 55 130 58 118 Z" fill="#243d7c"/>
<path d="M75 142 C81 148 85 152 89 158 L70 158 Z" fill="#d9b7a5"/>
<path d="M74 57 C80 50 89 50 89 53 V70 C84 72 77 66 74 57 Z" fill="#6e747a"/>
<text x="1" y="125" font-family="Liberation Sans" font-weight="bold" font-size="7" fill="#dde4f4">СИНТЕЗ</text>
<circle cx="62" cy="122" r="5" fill="none" stroke="#c8d2ea" stroke-width="1"/>
</g></svg>
<div style="left:1609px;top:952.7px;width:156px;height:24.2px;background:rgba(45,45,45,0.88);"></div>
<svg style="left:1613.5px;top:956.5px;" width="18" height="18" viewBox="0 0 18 18"><rect x="5" y="0.5" width="6.5" height="12.5" rx="3.2" fill="#f25c5c"/><rect x="5" y="14.5" width="6.3" height="2" fill="#f25c5c"/><path d="M8 12 V15" stroke="#f25c5c" stroke-width="1.5"/><path d="M0.8 16 L16.5 0.8" stroke="#2d2d2d" stroke-width="3.2"/><path d="M0.8 16 L16.5 0.8" stroke="#f25c5c" stroke-width="1.6" stroke-linecap="round"/></svg>
<div id="t69" class="t" style="transform:scaleX(0.9808);left:1637.5px;top:957.83px;font-family:'Liberation Sans',sans-serif;font-size:15.5px;line-height:15.5px;color:#f0f0f0;font-weight:400;white-space:pre;">Ольга Красновид</div>
<svg style="left:1854px;top:985px;" width="14" height="30" viewBox="0 0 14 30"><path d="M7 1 L13 8 H1 Z M7 7 L13 14 H1 Z" fill="#737373"/><path d="M1 22 H13 L7 29 Z" fill="#737373"/></svg>
<svg style="left:42px;top:1021px;" width="32" height="31" viewBox="0 0 32 31"><rect x="10.5" y="1" width="9" height="17" rx="4.5" fill="#a8a8a8"/><path d="M7 13 C7 19 10 22 15 22 C20 22 23 19 23 13" fill="none" stroke="#a8a8a8" stroke-width="1.8"/><path d="M15 22 V27 M10.5 27.5 H19.5" stroke="#a8a8a8" stroke-width="1.8"/><path d="M2 29 L30 1" stroke="#1a1a1a" stroke-width="3"/><path d="M2 29 L30 1" stroke="#e5484d" stroke-width="1.8"/></svg>
<svg style="left:92px;top:1032px;" width="11" height="7" viewBox="0 0 11 7"><path d="M1.5 5.5 L5.5 1.5 L9.5 5.5" fill="none" stroke="#d0d0d0" stroke-width="1.8"/></svg>
<div id="t70" class="t" style="transform:scaleX(1.0132);left:30.5px;top:1057.62px;font-family:'Liberation Sans',sans-serif;font-size:15.5px;line-height:15.5px;color:#cfd2d8;font-weight:400;white-space:pre;-webkit-text-stroke:0.2px currentColor;">Unmute</div>
<svg style="left:157px;top:1021px;" width="34" height="30" viewBox="0 0 34 30"><rect x="1.5" y="6" width="21" height="17.5" rx="2.5" fill="#a8a8a8"/><path d="M23.5 11.5 L32 6.5 V23 L23.5 18 Z" fill="#a8a8a8"/><path d="M2.5 28.5 L31 1" stroke="#1a1a1a" stroke-width="3"/><path d="M2.5 28.5 L31 1" stroke="#e5484d" stroke-width="1.8"/></svg>
<svg style="left:214.5px;top:1032px;" width="11" height="7" viewBox="0 0 11 7"><path d="M1.5 5.5 L5.5 1.5 L9.5 5.5" fill="none" stroke="#d0d0d0" stroke-width="1.8"/></svg>
<div id="t71" class="t" style="left:136px;top:1057.62px;font-family:'Liberation Sans',sans-serif;font-size:15.5px;line-height:15.5px;color:#cfd2d8;font-weight:400;white-space:pre;-webkit-text-stroke:0.2px currentColor;">Start Video</div>
<svg style="left:434px;top:1025px;" width="32" height="23" viewBox="0 0 32 23"><circle cx="10" cy="5.5" r="5.2" fill="#a8a8a8"/><path d="M0.5 21.5 C0.5 14 4.5 11.5 10 11.5 C15.5 11.5 19.5 14 19.5 21.5 Z" fill="#a8a8a8"/><circle cx="23" cy="8.5" r="4.3" fill="#a8a8a8"/><path d="M17.5 15 C19 13.5 21 13.3 23 13.3 C28 13.3 31 15.5 31 21.5 H20.5 C20.5 18.5 19.5 16.5 17.5 15 Z" fill="#a8a8a8"/></svg>
<div id="t72" class="t" style="transform:scaleX(0.9308);left:471px;top:1027.30px;font-family:'Liberation Sans',sans-serif;font-size:14px;line-height:14px;color:#cfd2d8;font-weight:400;white-space:pre;">10</div>
<svg style="left:510.5px;top:1032px;" width="11" height="7" viewBox="0 0 11 7"><path d="M1.5 5.5 L5.5 1.5 L9.5 5.5" fill="none" stroke="#d0d0d0" stroke-width="1.8"/></svg>
<div id="t73" class="t" style="transform:scaleX(0.9878);left:410.5px;top:1057.62px;font-family:'Liberation Sans',sans-serif;font-size:15.5px;line-height:15.5px;color:#cfd2d8;font-weight:400;white-space:pre;-webkit-text-stroke:0.2px currentColor;">Participants</div>
<svg style="left:574px;top:1024px;" width="30" height="25" viewBox="0 0 30 25"><path d="M4 1 H24 A3.5 3.5 0 0 1 27.5 4.5 V15 A3.5 3.5 0 0 1 24 18.5 H13 L7 23.5 V18.5 H4 A3.5 3.5 0 0 1 0.5 15 V4.5 A3.5 3.5 0 0 1 4 1 Z" fill="#a8a8a8"/></svg>
<div style="left:592.5px;top:1017.5px;width:19px;height:18.5px;background:#e8353c;border-radius:7px;"></div>
<div id="t74" class="t" style="left:598px;top:1021.38px;font-family:'Liberation Sans',sans-serif;font-size:12.5px;line-height:12.5px;color:#ffffff;font-weight:700;white-space:pre;">1</div>
<svg style="left:623.5px;top:1032px;" width="11" height="7" viewBox="0 0 11 7"><path d="M1.5 5.5 L5.5 1.5 L9.5 5.5" fill="none" stroke="#d0d0d0" stroke-width="1.8"/></svg>
<div id="t75" class="t" style="transform:scaleX(0.9618);left:573px;top:1057.62px;font-family:'Liberation Sans',sans-serif;font-size:15.5px;line-height:15.5px;color:#cfd2d8;font-weight:400;white-space:pre;-webkit-text-stroke:0.2px currentColor;">Chat</div>
<div style="left:690.5px;top:1024.5px;width:31px;height:22.5px;background:#22cc5e;border-radius:3.5px;"></div>
<svg style="left:698px;top:1027px;" width="16" height="17" viewBox="0 0 16 17"><path d="M8 15 V3 M3 7.5 L8 2.5 L13 7.5" fill="none" stroke="#111" stroke-width="2.4" stroke-linecap="round" stroke-linejoin="round"/></svg>
<div id="t76" class="t" style="transform:scaleX(0.9390);left:662px;top:1057.62px;font-family:'Liberation Sans',sans-serif;font-size:15.5px;line-height:15.5px;color:#2fd164;font-weight:400;white-space:pre;-webkit-text-stroke:0.2px currentColor;">Share Screen</div>
<svg style="left:804px;top:1020px;" width="28" height="32" viewBox="0 0 28 32"><path d="M3 1 H17 L26 10 V28 A3 3 0 0 1 23 31 H3 A3 3 0 0 1 0.5 28 V4 A3 3 0 0 1 3 1 Z" fill="#a8a8a8"/><path d="M17 1 V10 H26" fill="#d8d8d8"/><path d="M17 1 L17 10 L26 10 Z" fill="#1a1a1a" opacity="0.35"/><path d="M11 14 C11.5 18 12.5 19 16 19.5 C12.5 20 11.5 21 11 25 C10.5 21 9.5 20 6 19.5 C9.5 19 10.5 18 11 14 Z" fill="#1a1a1a"/><path d="M17.5 12 C17.7 13.5 18 14 19.5 14.2 C18 14.4 17.7 15 17.5 16.5 C17.3 15 17 14.4 15.5 14.2 C17 14 17.3 13.5 17.5 12 Z" fill="#1a1a1a"/></svg>
<div id="t77" class="t" style="left:785px;top:1057.62px;font-family:'Liberation Sans',sans-serif;font-size:15.5px;line-height:15.5px;color:#cfd2d8;font-weight:400;white-space:pre;-webkit-text-stroke:0.2px currentColor;">Summary</div>
<svg style="left:910px;top:1020px;" width="33" height="32" viewBox="0 0 33 32"><path d="M15 5 C16.5 15 19 18 29 19.5 C19 21 16.5 24 15 31 C13.5 24 11 21 1 19.5 C11 18 13.5 15 15 5 Z" fill="#a8a8a8"/><path d="M26 1 C26.5 4.5 27.5 5.5 31 6 C27.5 6.5 26.5 7.5 26 11 C25.5 7.5 24.5 6.5 21 6 C24.5 5.5 25.5 4.5 26 1 Z" fill="#a8a8a8"/></svg>
<div id="t78" class="t" style="transform:scaleX(0.9874);left:878px;top:1057.62px;font-family:'Liberation Sans',sans-serif;font-size:15.5px;line-height:15.5px;color:#cfd2d8;font-weight:400;white-space:pre;-webkit-text-stroke:0.2px currentColor;">AI Companion</div>
<svg style="left:1021px;top:1022px;" width="28" height="28" viewBox="0 0 28 28"><circle cx="14" cy="14" r="12.3" fill="none" stroke="#a8a8a8" stroke-width="1.6"/><circle cx="14" cy="14" r="9.8" fill="#a8a8a8"/></svg>
<div id="t79" class="t" style="transform:scaleX(0.9606);left:1011.2px;top:1057.62px;font-family:'Liberation Sans',sans-serif;font-size:15.5px;line-height:15.5px;color:#cfd2d8;font-weight:400;white-space:pre;-webkit-text-stroke:0.2px currentColor;">Record</div>
<div style="left:1130px;top:1024.5px;width:30px;height:22.5px;background:#a8a8a8;border-radius:3.5px;"></div>
<div id="t80" class="t" style="transform:scaleX(1.1243);left:1135.5px;top:1030.80px;font-family:'Liberation Sans',sans-serif;font-size:12px;line-height:12px;color:#222;font-weight:700;white-space:pre;">CC</div>
<svg style="left:1183.5px;top:1032px;" width="11" height="7" viewBox="0 0 11 7"><path d="M1.5 5.5 L5.5 1.5 L9.5 5.5" fill="none" stroke="#d0d0d0" stroke-width="1.8"/></svg>
<div id="t81" class="t" style="transform:scaleX(0.9639);left:1095px;top:1057.62px;font-family:'Liberation Sans',sans-serif;font-size:15.5px;line-height:15.5px;color:#cfd2d8;font-weight:400;white-space:pre;-webkit-text-stroke:0.2px currentColor;">Show Captions</div>
<svg style="left:1249px;top:1022px;" width="24" height="28" viewBox="0 0 24 28"><path d="M5 13 V4.5 A1.7 1.7 0 0 1 8.4 4.5 V12 V2.5 A1.7 1.7 0 0 1 11.8 2.5 V12 V3 A1.7 1.7 0 0 1 15.2 3 V12.5 V6 A1.7 1.7 0 0 1 18.6 6 V16 C18.6 17 19 15 20.5 13.5 C21.5 12.5 23 13 22.5 14.5 C21 18 19.5 21 17.5 23.5 C15.5 26 13 27 10.5 27 C6.5 27 5 24 5 20 Z" fill="#a8a8a8"/></svg>
<div id="t82" class="t" style="transform:scaleX(0.9321);left:1222.5px;top:1057.62px;font-family:'Liberation Sans',sans-serif;font-size:15.5px;line-height:15.5px;color:#cfd2d8;font-weight:400;white-space:pre;-webkit-text-stroke:0.2px currentColor;">Raise Hand</div>
<svg style="left:1353px;top:1025px;" width="24" height="24" viewBox="0 0 24 24"><path d="M9 2.5 H5 A3 3 0 0 0 2 5.5 V10 M2 14 V18.5 A3 3 0 0 0 5 21.5 M13 21.5 H18 A3 3 0 0 0 21 18.5 V14" fill="none" stroke="#a8a8a8" stroke-width="2"/><circle cx="18" cy="5" r="3.3" fill="none" stroke="#a8a8a8" stroke-width="2"/><circle cx="5.5" cy="18" r="3.3" fill="none" stroke="#a8a8a8" stroke-width="2"/></svg>
<div id="t83" class="t" style="transform:scaleX(0.9761);left:1348px;top:1057.62px;font-family:'Liberation Sans',sans-serif;font-size:15.5px;line-height:15.5px;color:#cfd2d8;font-weight:400;white-space:pre;-webkit-text-stroke:0.2px currentColor;">Apps</div>
<svg style="left:1462px;top:1023px;" width="28" height="24" viewBox="0 0 28 24"><path d="M9 19 H5 A3.5 3.5 0 0 1 1.5 15.5 V5 A3.5 3.5 0 0 1 5 1.5 H21.5 A3.5 3.5 0 0 1 25 5 V15" fill="none" stroke="#a8a8a8" stroke-width="2"/><rect x="10.5" y="16.5" width="16" height="5" rx="2.5" fill="#a8a8a8"/></svg>
<div id="t84" class="t" style="transform:scaleX(1.0056);left:1433px;top:1057.62px;font-family:'Liberation Sans',sans-serif;font-size:15.5px;line-height:15.5px;color:#cfd2d8;font-weight:400;white-space:pre;-webkit-text-stroke:0.2px currentColor;">Whiteboards</div>
<svg style="left:1587px;top:1023px;" width="26" height="28" viewBox="0 0 26 28"><path d="M6 1.5 H18 A2.5 2.5 0 0 1 20.5 4 V19 M6 1.5 A2.5 2.5 0 0 0 3.5 4 V23 A2.5 2.5 0 0 0 6 25.5 H8" fill="none" stroke="#a8a8a8" stroke-width="2"/><path d="M1.5 6 H5 M1.5 10.5 H5 M1.5 15 H5 M1.5 19.5 H5" stroke="#a8a8a8" stroke-width="1.6"/><path d="M8.5 7 H16 M8.5 11 H16 M8.5 15 H13" stroke="#a8a8a8" stroke-width="1.8"/><rect x="9.5" y="21.5" width="15.5" height="5" rx="2.5" fill="#a8a8a8"/></svg>
<div id="t85" class="t" style="transform:scaleX(0.9877);left:1579.4px;top:1057.62px;font-family:'Liberation Sans',sans-serif;font-size:15.5px;line-height:15.5px;color:#cfd2d8;font-weight:400;white-space:pre;-webkit-text-stroke:0.2px currentColor;">Notes</div>
<div style="left:1828px;top:1030.3px;width:77px;height:33.5px;background:#c0252b;border-radius:8px;"></div>
<div id="t86" class="t" style="transform:scaleX(0.9284);left:1846.5px;top:1039.75px;font-family:'Liberation Sans',sans-serif;font-size:15px;line-height:15px;color:#ffffff;font-weight:700;white-space:pre;">Leave</div>
<div style="left:15.3px;top:950px;width:49.5px;height:49.5px;background:rgba(20,22,25,0.82);border-radius:50%;box-shadow:0 0 0 1px #2a2f35;box-sizing:border-box;"></div>
<svg style="left:29px;top:963px;" width="24" height="24" viewBox="0 0 24 24"><path d="M3.5 20.5 C2 19 2.5 17 4 15.5 L15.5 4 L20 8.5 L8.5 20 C7 21.5 5 22 3.5 20.5 Z M13 6.5 L17.5 11 M15.5 4 L17.5 2 C18.3 1.2 19.5 1.2 20.3 2 L22 3.7 C22.8 4.5 22.8 5.7 22 6.5 L20 8.5" fill="none" stroke="#22c55e" stroke-width="1.8" stroke-linejoin="round"/></svg>
</body></html>
